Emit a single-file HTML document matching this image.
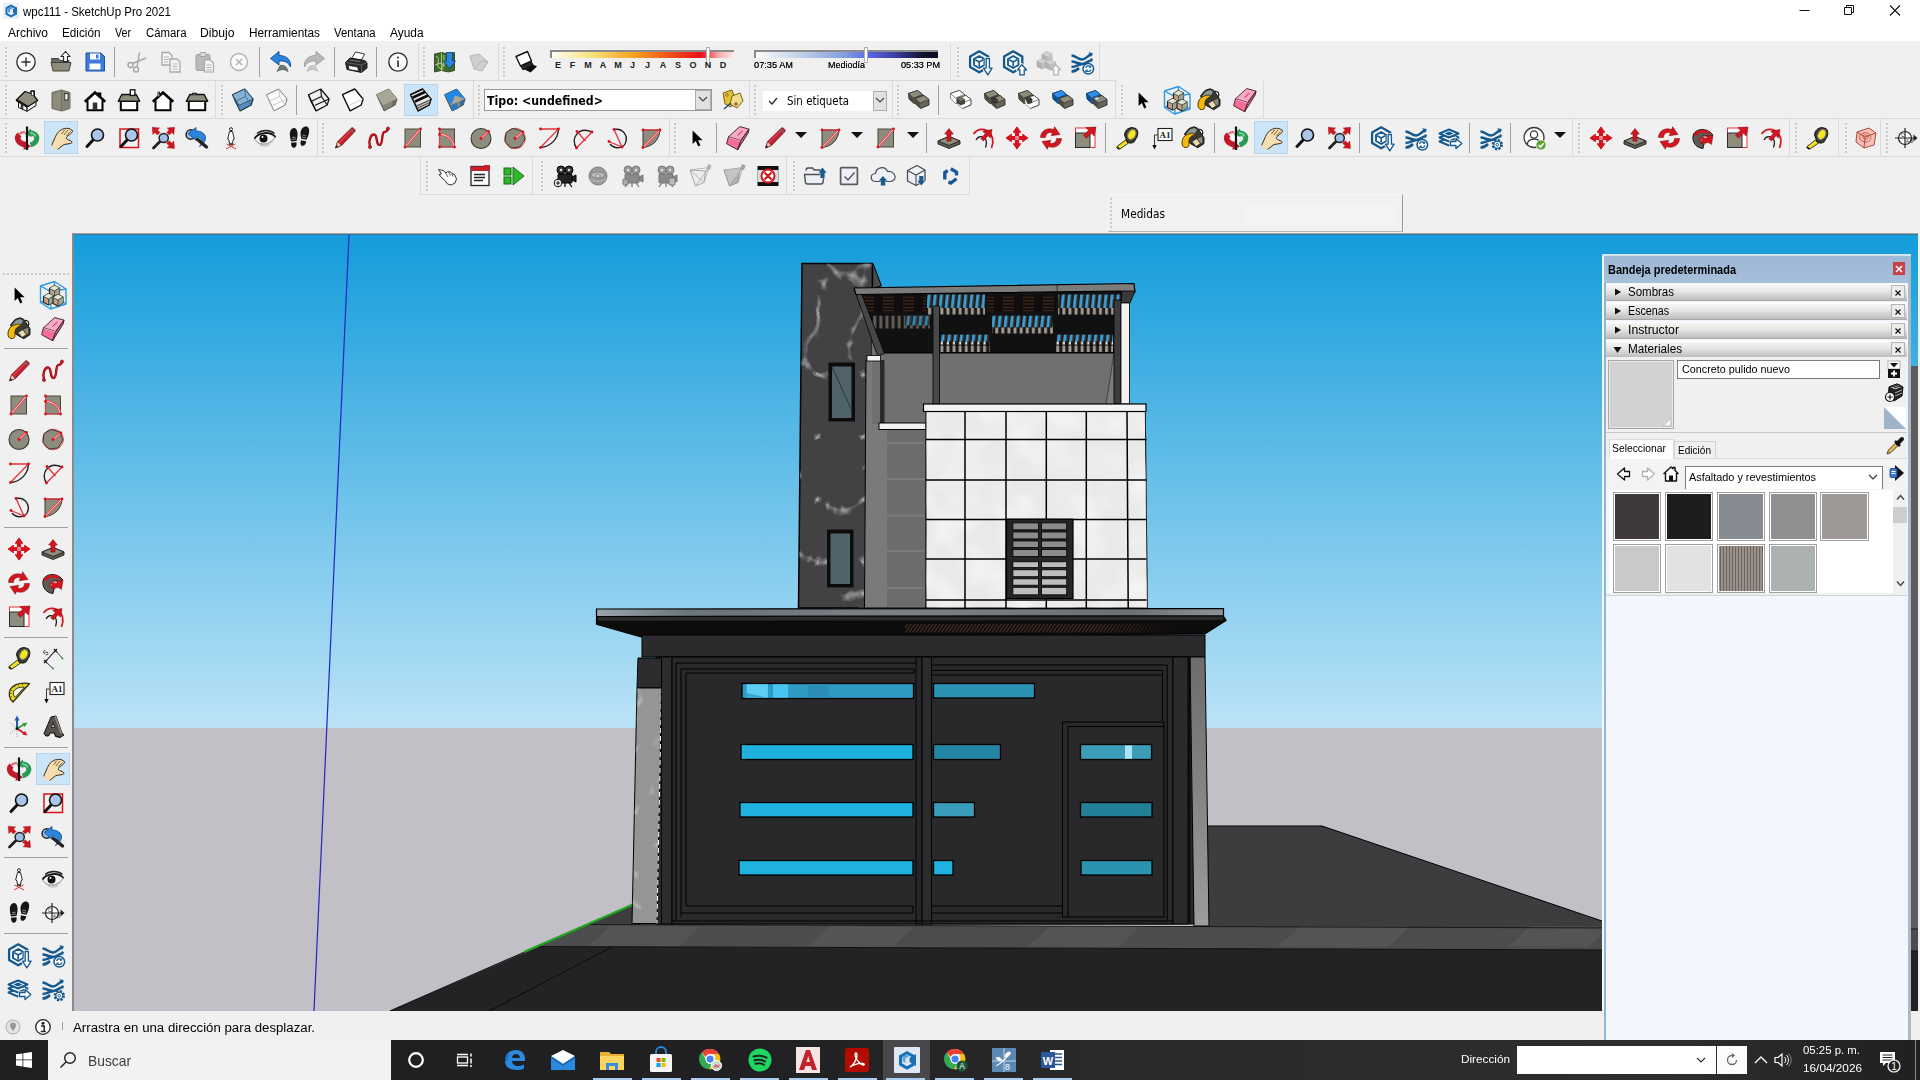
<!DOCTYPE html><html><head><meta charset="utf-8"><title>wpc111 - SketchUp Pro 2021</title>
<style>html,body{margin:0;padding:0}body{width:1920px;height:1080px;overflow:hidden;position:relative;background:#f0f0f0;font-family:"Liberation Sans",sans-serif}svg{overflow:visible}</style></head><body>
<div style="position:absolute;left:0px;top:0px;width:1920px;height:41px;background:#fff;"></div>
<svg style="position:absolute;left:3px;top:3px" width="16" height="16" viewBox="0 0 16 16"><rect width="16" height="16" fill="#e8f0f8"/><path d="M8 1.500l5.500 3-2 1.200L8 3.800 4.500 5.800v4.400l3.500 2 3.500-2 2 1.300L8 14.500 2.500 11.500v-7z" fill="#1a6fb5"/><path d="M10 6l4-2v8l-4-2.300z" fill="#1a6fb5"/><path d="M5 5.500l3-1.500 2 1-3 1.800v3l-2-1z" fill="#4a9ad8"/></svg>
<span style="position:absolute;left:23px;top:3.5px;font:12px/16px 'Liberation Sans',sans-serif;color:#000;white-space:pre;transform-origin:0 50%;transform:scaleX(0.9591);">wpc111 - SketchUp Pro 2021</span>
<span style="position:absolute;left:7.5px;top:24.5px;font:12px/16px 'Liberation Sans',sans-serif;color:#000;white-space:pre;transform-origin:0 50%;transform:scaleX(0.9996);">Archivo</span>
<span style="position:absolute;left:62px;top:24.5px;font:12px/16px 'Liberation Sans',sans-serif;color:#000;white-space:pre;transform-origin:0 50%;transform:scaleX(0.9782);">Edición</span>
<span style="position:absolute;left:115px;top:24.5px;font:12px/16px 'Liberation Sans',sans-serif;color:#000;white-space:pre;transform-origin:0 50%;transform:scaleX(0.8883);">Ver</span>
<span style="position:absolute;left:145.5px;top:24.5px;font:12px/16px 'Liberation Sans',sans-serif;color:#000;white-space:pre;transform-origin:0 50%;transform:scaleX(0.9489);">Cámara</span>
<span style="position:absolute;left:200px;top:24.5px;font:12px/16px 'Liberation Sans',sans-serif;color:#000;white-space:pre;transform-origin:0 50%;transform:scaleX(1.0142);">Dibujo</span>
<span style="position:absolute;left:249px;top:24.5px;font:12px/16px 'Liberation Sans',sans-serif;color:#000;white-space:pre;transform-origin:0 50%;transform:scaleX(0.9858);">Herramientas</span>
<span style="position:absolute;left:334px;top:24.5px;font:12px/16px 'Liberation Sans',sans-serif;color:#000;white-space:pre;transform-origin:0 50%;transform:scaleX(0.9422);">Ventana</span>
<span style="position:absolute;left:390px;top:24.5px;font:12px/16px 'Liberation Sans',sans-serif;color:#000;white-space:pre;transform-origin:0 50%;transform:scaleX(0.9909);">Ayuda</span>
<svg style="position:absolute;left:1780px;top:0" width="140" height="22" viewBox="1780 0 140 22"><path d="M1799.500 10.500h10" stroke="#111" stroke-width="1"/><path d="M1844.500 7.500h7v7h-7zM1846.500 7.500v-2h7v7h-2" fill="none" stroke="#111" stroke-width="1"/><path d="M1890 5.500l10 10M1900 5.500l-10 10" stroke="#111" stroke-width="1.100"/></svg>
<div style="position:absolute;left:0px;top:80px;width:1116px;height:1px;background:#dadada;"></div>
<div style="position:absolute;left:0px;top:118px;width:1920px;height:1px;background:#dadada;"></div>
<div style="position:absolute;left:0px;top:156px;width:1920px;height:1px;background:#dadada;"></div>
<div style="position:absolute;left:420px;top:194px;width:550px;height:1px;background:#dadada;"></div>
<div style="position:absolute;left:969px;top:157px;width:1px;height:38px;background:#dadada;"></div>
<div style="position:absolute;left:420px;top:157px;width:1px;height:38px;background:#dadada;"></div>
<div style="position:absolute;left:5px;top:46.7px;width:2px;height:30.0px;background:repeating-linear-gradient(#cbcbcb 0 2px,transparent 2px 4px)"></div>
<svg style="position:absolute;left:14.0px;top:49.7px" width="24" height="24" viewBox="0 0 24 24"><circle cx="12" cy="12" r="9.200" fill="#fafafa" stroke="#2a2a2a" stroke-width="1.300"/><path d="M12 7.500v9M7.500 12h9" stroke="#2a2a2a" stroke-width="1.400"/></svg>
<svg style="position:absolute;left:49.0px;top:49.7px" width="24" height="24" viewBox="0 0 24 24"><path d="M2.500 8.500h7l1.500 2h9v3h-17z" fill="#6e6c60" stroke="#3a382e" stroke-width="0.900"/><path d="M2 12.500h20l-2 8.500H4z" fill="#8e8c7c" stroke="#3a382e" stroke-width="0.900"/><path d="M16.500 1.500l4.500 5h-2.600v5h-3.800v-5H12z" fill="#fff" stroke="#222" stroke-width="1.100" stroke-linejoin="round"/></svg>
<svg style="position:absolute;left:83.0px;top:49.7px" width="24" height="24" viewBox="0 0 24 24"><path d="M3 3h15l3.5 3.5V21H3z" fill="#3b7bdc" stroke="#1f4fa0" stroke-width="1"/><rect x="7" y="3.5" width="10" height="6" fill="#fff"/><rect x="13" y="4.5" width="2.5" height="4" fill="#3b7bdc"/><rect x="6.5" y="13.5" width="11" height="6" fill="#fff"/></svg>
<div style="position:absolute;left:114px;top:46.7px;width:1px;height:30.0px;background:#a0a0a0;"></div>
<svg style="position:absolute;left:124.0px;top:49.7px" width="24" height="24" viewBox="0 0 24 24"><g fill="none" stroke="#a8a8a8" stroke-width="1.4"><circle cx="6.5" cy="15" r="2.5"/><circle cx="12" cy="19.5" r="2.5"/><path d="M8.5 13.5L22 8M13 17.5L15.5 2.5"/></g></svg>
<svg style="position:absolute;left:159.0px;top:49.7px" width="24" height="24" viewBox="0 0 24 24"><g fill="#f4f4f4" stroke="#a8a8a8" stroke-width="1.3"><path d="M3 2.5h7l3 3V15H3z"/><path d="M11 9h7l3 3v10H11z"/></g><path d="M5 7h5M5 9.5h5M5 12h4M13.5 14h5M13.5 16.5h5M13.5 19h5" stroke="#b4b4b4"/></svg>
<svg style="position:absolute;left:193.0px;top:49.7px" width="24" height="24" viewBox="0 0 24 24"><rect x="3" y="4.500" width="14" height="16" rx="1.5" fill="#b9b9b9" stroke="#a0a0a0"/><rect x="7" y="2.500" width="6" height="4" rx="1" fill="#dcdcdc" stroke="#a0a0a0"/><path d="M11.5 10h6l3 3v9h-9z" fill="#f4f4f4" stroke="#a8a8a8" stroke-width="1.2"/><path d="M13.500 15h5M13.500 17.500h5M13.500 20h5" stroke="#b4b4b4"/></svg>
<svg style="position:absolute;left:227.0px;top:49.7px" width="24" height="24" viewBox="0 0 24 24"><circle cx="12" cy="12" r="8.500" fill="#fafafa" stroke="#b4b4b4" stroke-width="1.4"/><path d="M9 9l6 6M15 9l-6 6" stroke="#b4b4b4" stroke-width="1.5"/></svg>
<div style="position:absolute;left:259px;top:46.7px;width:1px;height:30.0px;background:#a0a0a0;"></div>
<svg style="position:absolute;left:269.0px;top:49.7px" width="24" height="24" viewBox="0 0 24 24"><path d="M11 15.500c4-1 7 1 8 6-4-2.500-7-2.500-11 0z" fill="#6a7a70" stroke="#3a4a40" stroke-width="0.600"/><path d="M1.500 8.500L10 1.500v4c8 0 12.500 5 11.500 11.500-2-4.500-5.500-6.500-11.500-6V15z" fill="#2a86dc" stroke="#0f4a8c" stroke-width="0.900"/></svg>
<svg style="position:absolute;left:302.0px;top:49.7px" width="24" height="24" viewBox="0 0 24 24"><path d="M13 15.500c-4-1-7 1-8 6 4-2.500 7-2.500 11 0z" fill="#c8c8c8" stroke="#b0b0b0" stroke-width="0.600"/><path d="M22.500 8.500L14 1.500v4c-8 0-12.500 5-11.500 11.500 2-4.500 5.500-6.500 11.500-6V15z" fill="#b8b8b8" stroke="#9a9a9a" stroke-width="0.900"/></svg>
<div style="position:absolute;left:334px;top:46.7px;width:1px;height:30.0px;background:#a0a0a0;"></div>
<svg style="position:absolute;left:344.0px;top:49.7px" width="24" height="24" viewBox="0 0 24 24"><path d="M7.500 8.500l4-6.500 9 2-3 6z" fill="#fff" stroke="#222" stroke-width="0.900"/><path d="M1.500 12.500L6 8l14.500 2.500 2.500 2v5.500l-5.500 4.500L3 19.500z" fill="#2c2c2c" stroke="#111" stroke-width="0.900" stroke-linejoin="round"/><path d="M1.500 12.500l16 2.500 5.500-2.500M17.500 15v7.500" stroke="#6a6a6a" stroke-width="0.800" fill="none"/><path d="M6 10l10 1.500" stroke="#777" stroke-width="1.200"/><path d="M4.500 15.500l9 1.500 1 4-9.500-1.500z" fill="#fff" stroke="#111" stroke-width="0.600"/></svg>
<div style="position:absolute;left:376px;top:46.7px;width:1px;height:30.0px;background:#a0a0a0;"></div>
<svg style="position:absolute;left:386.0px;top:49.7px" width="24" height="24" viewBox="0 0 24 24"><circle cx="12" cy="12" r="9.200" fill="#fafafa" stroke="#2a2a2a" stroke-width="1.300"/><path d="M12 10.500v6.500" stroke="#2a2a2a" stroke-width="1.600"/><circle cx="12" cy="7.500" r="1" fill="#2a2a2a"/></svg>
<div style="position:absolute;left:418px;top:42.7px;width:1px;height:38.0px;background:#dadada;"></div>
<div style="position:absolute;left:423px;top:46.7px;width:2px;height:30.0px;background:repeating-linear-gradient(#cbcbcb 0 2px,transparent 2px 4px)"></div>
<svg style="position:absolute;left:433.0px;top:49.7px" width="24" height="24" viewBox="0 0 24 24"><path d="M1.500 4l7-1.500 7 1.500 6-1.500v18l-6 1.500-7-1.500-7 1.500z" fill="#3f6a2a" stroke="#1e3612" stroke-width="0.800"/><path d="M3 6c2 1 3 4 2 7s1 5 3 6M8.500 3v18M11 5c-1 3 1 5 0 8s-2 4-1 7" stroke="#9cc878" stroke-width="1.100" fill="none"/><path d="M2 15l6-2 4 3" stroke="#c8c0a0" stroke-width="1" fill="none"/><path d="M13.500 2.500h6v8.500h3l-6 7.500-6-7.500h3z" fill="#2a86dc" stroke="#0f4a8c" stroke-width="0.900"/></svg>
<svg style="position:absolute;left:467.0px;top:49.7px" width="24" height="24" viewBox="0 0 24 24"><path d="M3 6l9-2 9 8-6 9-8-2z" fill="#d0d0d0" stroke="#b4b4b4"/><path d="M7 19l8-8 6 1" stroke="#b4b4b4" fill="none"/></svg>
<div style="position:absolute;left:498px;top:42.7px;width:1px;height:38.0px;background:#dadada;"></div>
<div style="position:absolute;left:503px;top:46.7px;width:2px;height:30.0px;background:repeating-linear-gradient(#cbcbcb 0 2px,transparent 2px 4px)"></div>
<svg style="position:absolute;left:514.0px;top:49.7px" width="24" height="24" viewBox="0 0 24 24"><path d="M7 17.500l9.500 5 6.500-6-6-3z" fill="#0c0c0c"/><path d="M6.500 16l10.500-5 2 3.500-10 5.500z" fill="#2a2a2a" stroke="#111" stroke-width="0.800"/><path d="M2 6.500L13.500 1.500l4 9.500L6.500 16z" fill="#fff" stroke="#111" stroke-width="1.400" stroke-linejoin="round"/></svg>
<div style="position:absolute;left:950px;top:42.7px;width:1px;height:38.0px;background:#dadada;"></div>
<div style="position:absolute;left:957px;top:46.7px;width:2px;height:30.0px;background:repeating-linear-gradient(#cbcbcb 0 2px,transparent 2px 4px)"></div>
<svg style="position:absolute;left:968.0px;top:49.7px" width="24" height="24" viewBox="0 0 24 24"><path d="M11.200 1.300L20.300 6.550V17.050L11.200 22.300 2.100 17.050V6.550z" fill="#f0f0f0" stroke="#14598f" stroke-width="2.300" stroke-linejoin="round"/><path d="M11.200 3.900L18 7.850v7.900L11.200 19.700 4.400 15.750V7.850z" fill="none" stroke="#fff" stroke-width="1"/><path d="M11.200 6L16.400 9v6L11.200 18 6 15V9z" fill="#fff" stroke="#14598f" stroke-width="1.900" stroke-linejoin="round"/><path d="M11.200 12v4.500M11.200 12l3.900-2.200M11.200 12L7.300 9.800" stroke="#14598f" stroke-width="1.600"/><path d="M18.200 8.500h3.200v9.700h2.700L19.800 24.900 15.500 18.200h2.700z" fill="#fff" stroke="#f0f0f0" stroke-width="3" stroke-linejoin="round"/><path d="M18.200 8.500h3.200v9.700h2.700L19.800 24.900 15.500 18.200h2.700z" fill="#fff" stroke="#14598f" stroke-width="1.300" stroke-linejoin="round"/></svg>
<svg style="position:absolute;left:1002.0px;top:49.7px" width="24" height="24" viewBox="0 0 24 24"><path d="M11.200 1.300L20.300 6.550V17.050L11.200 22.300 2.100 17.050V6.550z" fill="#f0f0f0" stroke="#14598f" stroke-width="2.300" stroke-linejoin="round"/><path d="M11.200 3.900L18 7.850v7.900L11.200 19.700 4.400 15.750V7.850z" fill="none" stroke="#fff" stroke-width="1"/><path d="M11.200 6L16.400 9v6L11.200 18 6 15V9z" fill="#fff" stroke="#14598f" stroke-width="1.900" stroke-linejoin="round"/><path d="M11.200 12v4.500M11.200 12l3.900-2.200M11.200 12L7.300 9.800" stroke="#14598f" stroke-width="1.600"/><path d="M17.900 24.900h4.300v-5.100h2.300L19.800 14.700 15.500 19.800h2.400z" fill="#fff" stroke="#f0f0f0" stroke-width="3" stroke-linejoin="round"/><path d="M17.900 24.900h4.300v-5.100h2.300L19.800 14.700 15.500 19.800h2.400z" fill="#fff" stroke="#14598f" stroke-width="1.300" stroke-linejoin="round"/></svg>
<svg style="position:absolute;left:1036.0px;top:49.7px" width="24" height="24" viewBox="0 0 24 24"><g transform="translate(6 1.5)"><path d="M0 2.500L5 0l5 2.500v5.500L5 10.500 0 8z" fill="#b4b4b4" stroke="#a0a0a0" stroke-width="0.600"/><path d="M0 2.500L5 0l5 2.500L5 5z" fill="#d2d2d2"/><path d="M5 5l5-2.500v5.500L5 10.500z" fill="#c2c2c2"/></g><g transform="translate(1 8.5)"><path d="M0 2.500L5 0l5 2.500v5.500L5 10.500 0 8z" fill="#b4b4b4" stroke="#a0a0a0" stroke-width="0.600"/><path d="M0 2.500L5 0l5 2.500L5 5z" fill="#d2d2d2"/><path d="M5 5l5-2.500v5.500L5 10.500z" fill="#c2c2c2"/></g><g transform="translate(9.5 9.5)"><path d="M0 2.500L5 0l5 2.500v5.500L5 10.500 0 8z" fill="#b4b4b4" stroke="#a0a0a0" stroke-width="0.600"/><path d="M0 2.500L5 0l5 2.500L5 5z" fill="#d2d2d2"/><path d="M5 5l5-2.500v5.500L5 10.500z" fill="#c2c2c2"/></g><path d="M17.900 24.900h4.300v-5.100h2.300L19.800 14.700 15.500 19.800h2.400z" fill="#fff" stroke="#b4b4b4" stroke-width="1.300" stroke-linejoin="round"/></svg>
<svg style="position:absolute;left:1070.0px;top:49.7px" width="24" height="24" viewBox="0 0 24 24"><g fill="none" stroke="#14598f" stroke-width="2.600" stroke-linejoin="round"><path d="M1.500 5.500c4 0 6.500 4 10.500 4s6.500-5 10-5.500"/><path d="M1.500 11.500c4 0 6.500 2.500 10.500 2.500s6.500-3.500 10-4"/><path d="M1.500 17c4 0 7-2.500 10.500-3"/><path d="M1.500 21.500c3 0 5.500-1.500 7.500-3.500"/></g><path d="M18.500 2l4.500 1.500-2 3.500z" fill="#14598f"/><path d="M20.500 8l2.500 1-1 3z" fill="#14598f"/><circle cx="18.300" cy="18.700" r="5.300" fill="#fff" stroke="#14598f" stroke-width="1.500"/><path d="M15.600 18a2.800 2.800 0 0 1 4.900-1.100M21 19.400a2.800 2.800 0 0 1-4.900 1.100" stroke="#14598f" stroke-width="1.200" fill="none"/><path d="M20.800 15.400v1.900h-1.900M15.800 22v-1.900h1.900" stroke="#14598f" stroke-width="1" fill="none"/></svg>
<div style="position:absolute;left:1099px;top:42.7px;width:1px;height:38.0px;background:#dadada;"></div>
<div style="position:absolute;left:950px;top:80px;width:150px;height:1px;background:#dadada;"></div>
<div style="position:absolute;left:5px;top:84.8px;width:2px;height:30.0px;background:repeating-linear-gradient(#cbcbcb 0 2px,transparent 2px 4px)"></div>
<svg style="position:absolute;left:15.0px;top:87.8px" width="24" height="24" viewBox="0 0 24 24"><path d="M3.500 12.500v7l8.500 3.800v-7z" fill="#fff" stroke="#111" stroke-width="1"/><path d="M12 16.300l9-5.300v6.500l-9 5.800z" fill="#ececec" stroke="#111" stroke-width="1"/><path d="M1.300 12L10 3.500l6 2V3h3.300v5.200l3.400 4.300-10.200 6.300z" fill="#8e8c7c" stroke="#111" stroke-width="1.300" stroke-linejoin="round"/><path d="M1.300 12l11.200 6.800" stroke="#111" stroke-width="2.200"/><path d="M5.700 15v5.300l2.600 1.100v-5.200z" fill="#333"/><rect x="16.500" y="3.600" width="2.200" height="3.800" fill="#fff" stroke="#111" stroke-width="0.600"/></svg>
<svg style="position:absolute;left:49.0px;top:87.8px" width="24" height="24" viewBox="0 0 24 24"><path d="M3 4.500L12.500 2l8.500 2.500v16L13 23 3 20.500z" fill="#8e8c7c" stroke="#5e5c50" stroke-width="0.900" stroke-linejoin="round"/><path d="M12.500 2L13 23" stroke="#5e5c50" stroke-width="0.900"/><path d="M13 23l8-2.500v-16L12.500 2z" fill="#848272"/><rect x="15.800" y="5.500" width="3.200" height="6.500" fill="#fff" stroke="#333" stroke-width="1"/></svg>
<svg style="position:absolute;left:83.0px;top:87.8px" width="24" height="24" viewBox="0 0 24 24"><path d="M4.500 12v10.200h15V12L12 5.500z" fill="#fff"/><path d="M1.800 13.800L12 4.500l3.200 2.900V5.800h1.800v3.200l5.200 4.800" fill="none" stroke="#000" stroke-width="2.600" stroke-linejoin="miter"/><path d="M4.500 12.500v9.700h15V12.500" fill="none" stroke="#000" stroke-width="2"/><rect x="9.700" y="14.500" width="4.600" height="7.500" fill="#333"/></svg>
<svg style="position:absolute;left:117.0px;top:87.8px" width="24" height="24" viewBox="0 0 24 24"><rect x="3.800" y="13" width="16.400" height="9.200" fill="#fff" stroke="#000" stroke-width="2"/><path d="M1.300 13.200L4.800 6.500h14.400l3.500 6.700z" fill="#8e8c7c" stroke="#111" stroke-width="1.400" stroke-linejoin="round"/><rect x="13.300" y="1.800" width="4.600" height="5.700" fill="#fff" stroke="#111" stroke-width="1.300"/></svg>
<svg style="position:absolute;left:151.0px;top:87.8px" width="24" height="24" viewBox="0 0 24 24"><path d="M4.500 12v10.200h15V12L12 5.500z" fill="#fff"/><path d="M1.800 13.800L12 4.500l10.200 9.300" fill="none" stroke="#000" stroke-width="2.600"/><path d="M4.500 12.500v9.700h15V12.500" fill="none" stroke="#000" stroke-width="2"/><path d="M7 9V4h1.500v3.500" fill="#fff" stroke="#111" stroke-width="0.900"/></svg>
<svg style="position:absolute;left:185.0px;top:87.8px" width="24" height="24" viewBox="0 0 24 24"><rect x="3.800" y="13" width="16.400" height="9.200" fill="#fff" stroke="#000" stroke-width="2"/><path d="M1.300 13.200L4.800 6.500h14.400l3.500 6.700z" fill="#8e8c7c" stroke="#111" stroke-width="1.400" stroke-linejoin="round"/><path d="M7.500 6.500V5.200h4v1.300" fill="#8e8c7c" stroke="#111" stroke-width="1"/></svg>
<div style="position:absolute;left:215px;top:80.8px;width:1px;height:38.0px;background:#dadada;"></div>
<div style="position:absolute;left:221px;top:84.8px;width:2px;height:30.0px;background:repeating-linear-gradient(#cbcbcb 0 2px,transparent 2px 4px)"></div>
<svg style="position:absolute;left:231.0px;top:87.8px" width="24" height="24" viewBox="0 0 24 24"><path d="M1.500 6.700L13.700 1 22.100 11 20.200 17 9.100 22.900z" fill="#5a8ec0" stroke="#1a2a3a" stroke-width="1.100" stroke-linejoin="round"/><path d="M1.500 6.700L13.700 1 22.100 11 8 17.300z" fill="#86b2d8" stroke="#1a2a3a" stroke-width="0.600"/><g fill="none" stroke="#3a6288" stroke-width="0.800"><path d="M1.500 6.700L4 13.500l5.100 9.400M4 13.500L14.500 8.500l5.700 8.500M13.700 1l.8 7.500"/></g></svg>
<svg style="position:absolute;left:265.0px;top:87.8px" width="24" height="24" viewBox="0 0 24 24"><path d="M1.500 6.700L13.700 1 22.100 11 20.200 17 9.100 22.900z" fill="#fdfdfd" stroke="#777" stroke-width="1" stroke-linejoin="round"/><g fill="none" stroke="#b8b8b8" stroke-width="0.800"><path d="M8 17.300L22.100 11M1.500 6.700L4 13.500l5.100 9.400M4 13.500L14.500 8.500l5.700 8.500M13.700 1l.8 7.500"/></g></svg>
<div style="position:absolute;left:296px;top:84.8px;width:1px;height:30.0px;background:#a0a0a0;"></div>
<svg style="position:absolute;left:307.0px;top:87.8px" width="24" height="24" viewBox="0 0 24 24"><g fill="none" stroke="#111" stroke-width="1.200" stroke-linejoin="round"><path d="M1.500 6.700L13.700 1 22.100 11 20.200 17 9.100 22.900z"/><path d="M8 17.300L22.100 11M1.500 6.700L4 13.500l5.100 9.400M4 13.500L14.500 8.500l5.700 8.500M13.700 1l.8 7.500"/></g></svg>
<svg style="position:absolute;left:341.0px;top:87.8px" width="24" height="24" viewBox="0 0 24 24"><path d="M1.500 6.700L13.700 1 22.100 11 20.200 17 9.100 22.900z" fill="#fff" stroke="#111" stroke-width="1.400" stroke-linejoin="round"/><path d="M8 17.300L22.100 11" stroke="#c4c4c4" stroke-width="0.800"/></svg>
<svg style="position:absolute;left:375.0px;top:87.8px" width="24" height="24" viewBox="0 0 24 24"><path d="M1.500 6.700L13.700 1 22.100 11 20.200 17 9.100 22.900z" fill="#86847a" stroke="#55534a" stroke-width="0.900" stroke-linejoin="round"/><path d="M1.500 6.700L13.700 1 22.100 11 8 17.300z" fill="#a8a696"/><path d="M17 13.300l5.100-2.300-1.900 6-3 1.600z" fill="#6e6c60"/></svg>
<div style="position:absolute;left:404.3px;top:83.5px;width:33.599999999999966px;height:32.400000000000006px;background:#cce4f7;border:1px solid #b6d6f0;box-sizing:border-box"></div>
<svg style="position:absolute;left:409.0px;top:87.8px" width="24" height="24" viewBox="0 0 24 24"><path d="M1.500 6.700L13.700 1 22.100 11 20.200 17 9.100 22.900z" fill="#8a8878" stroke="#111" stroke-width="1.100" stroke-linejoin="round"/><path d="M1.500 6.700L13.700 1 22.100 11 8 17.300z" fill="#e8e8e8"/><path d="M3.500 9.800L15.800 4M6 13.500L19 7.500" stroke="#0c0c0c" stroke-width="2.600"/><path d="M1.500 6.700L13.700 1" stroke="#0c0c0c" stroke-width="1.600"/><path d="M8 17.300L22.100 11 20.200 17 9.100 22.900z" fill="#55534a"/><path d="M8.300 19l12.800-5.800M8.800 21.300l11.800-5.600" stroke="#c8c8c8" stroke-width="1.100"/><path d="M1.500 6.700L13.700 1 22.100 11 20.200 17 9.100 22.900z" fill="none" stroke="#111" stroke-width="1.100" stroke-linejoin="round"/></svg>
<svg style="position:absolute;left:443.0px;top:87.8px" width="24" height="24" viewBox="0 0 24 24"><path d="M1.500 6.700L13.700 1 22.100 11 20.200 17 9.100 22.900z" fill="#8a8878" stroke="#2a3a4a" stroke-width="0.900" stroke-linejoin="round"/><path d="M1.500 6.700L13.700 1 22.100 11 8 17.300z" fill="#1f8ae6"/><path d="M8 17.300L22.100 11 12 7.500z" fill="#b0a890"/><path d="M8 17.300l6-2.700 1 6.300-5.900 2z" fill="#2d78c0"/><path d="M17 13.300l5.100-2.300-1.900 6-3 1.600z" fill="#3a6a9a"/></svg>
<div style="position:absolute;left:473px;top:80.8px;width:1px;height:38.0px;background:#dadada;"></div>
<div style="position:absolute;left:478px;top:84.8px;width:2px;height:30.0px;background:repeating-linear-gradient(#cbcbcb 0 2px,transparent 2px 4px)"></div>
<svg style="position:absolute;left:720.5px;top:87.8px" width="24" height="24" viewBox="0 0 24 24"><path d="M2 5l9-3 3 9-4 8-6-3z" fill="#e6c12e" stroke="#7a6210"/><path d="M11 8l8-3 3 8-6 7-7-4z" fill="#f0dc8a" stroke="#7a6210"/><circle cx="6" cy="7" r="1.200" fill="#fff" stroke="#7a6210"/><circle cx="15" cy="16" r="1.400" fill="#d9534f" stroke="#7a6210" stroke-width="0.6"/><path d="M3 21l7-6" stroke="#24408e" stroke-width="1.500"/></svg>
<div style="position:absolute;left:749px;top:80.8px;width:1px;height:38.0px;background:#dadada;"></div>
<div style="position:absolute;left:754px;top:84.8px;width:2px;height:30.0px;background:repeating-linear-gradient(#cbcbcb 0 2px,transparent 2px 4px)"></div>
<div style="position:absolute;left:892px;top:80.8px;width:1px;height:38.0px;background:#dadada;"></div>
<div style="position:absolute;left:897px;top:84.8px;width:2px;height:30.0px;background:repeating-linear-gradient(#cbcbcb 0 2px,transparent 2px 4px)"></div>
<svg style="position:absolute;left:907.0px;top:87.8px" width="24" height="24" viewBox="0 0 24 24"><path d="M1.5 5.5L10.5 2.5L15.5 6.5L15.5 12.0L7.0 15.5L2.0 11.0z" fill="#68665a" stroke="#2a2a26" stroke-width="0.9" stroke-linejoin="round"/><path d="M1.5 5.5L6.5 10.0L7.0 15.5L2.0 11.0z" fill="#4e4c42"/><path d="M1.5 5.5L10.5 2.5L15.5 6.5L6.5 10.0z" fill="#8e8c7c" stroke="#2a2a26" stroke-width="0.6" stroke-linejoin="round"/><path d="M8 10.5L17 7.5L22 11.5L22 17.0L13.5 20.5L8.5 16.0z" fill="#68665a" stroke="#2a2a26" stroke-width="0.9" stroke-linejoin="round"/><path d="M8 10.5L13 15.0L13.5 20.5L8.5 16.0z" fill="#4e4c42"/><path d="M8 10.5L17 7.5L22 11.5L13 15.0z" fill="#8e8c7c" stroke="#2a2a26" stroke-width="0.6" stroke-linejoin="round"/></svg>
<div style="position:absolute;left:938px;top:84.8px;width:1px;height:30.0px;background:#a0a0a0;"></div>
<svg style="position:absolute;left:949.0px;top:87.8px" width="24" height="24" viewBox="0 0 24 24"><path d="M1.5 5.5L10.5 2.5L15.5 6.5L15.5 12.0L7.0 15.5L2.0 11.0z" fill="#fff" stroke="#2a2a26" stroke-width="0.9" stroke-linejoin="round"/><path d="M1.5 5.5L6.5 10.0L7.0 15.5L2.0 11.0z" fill="#fff"/><path d="M1.5 5.5L10.5 2.5L15.5 6.5L6.5 10.0z" fill="#fff" stroke="#2a2a26" stroke-width="0.6" stroke-linejoin="round"/><path d="M8 10.5L17 7.5L22 11.5L22 17.0L13.5 20.5L8.5 16.0z" fill="#fff" stroke="#2a2a26" stroke-width="0.9" stroke-linejoin="round"/><path d="M8 10.5L13 15.0L13.5 20.5L8.5 16.0z" fill="#fff"/><path d="M8 10.5L17 7.5L22 11.5L13 15.0z" fill="#fff" stroke="#2a2a26" stroke-width="0.6" stroke-linejoin="round"/><path d="M8 10.500l4-1.500 3.500 2.500v4l-4 1.500L8 14.500z" fill="#4a483e" stroke="#222" stroke-width="0.700"/><path d="M8 10.500l4-1.500 3.500 2.500-4 1.500z" fill="#77756a"/></svg>
<svg style="position:absolute;left:983.0px;top:87.8px" width="24" height="24" viewBox="0 0 24 24"><path d="M1.5 5.5L10.5 2.5L15.5 6.5L15.5 12.0L7.0 15.5L2.0 11.0z" fill="#68665a" stroke="#2a2a26" stroke-width="0.9" stroke-linejoin="round"/><path d="M1.5 5.5L6.5 10.0L7.0 15.5L2.0 11.0z" fill="#4e4c42"/><path d="M1.5 5.5L10.5 2.5L15.5 6.5L6.5 10.0z" fill="#8e8c7c" stroke="#2a2a26" stroke-width="0.6" stroke-linejoin="round"/><path d="M8 10.5L17 7.5L22 11.5L22 17.0L13.5 20.5L8.5 16.0z" fill="#68665a" stroke="#2a2a26" stroke-width="0.9" stroke-linejoin="round"/><path d="M8 10.5L13 15.0L13.5 20.5L8.5 16.0z" fill="#4e4c42"/><path d="M8 10.5L17 7.5L22 11.5L13 15.0z" fill="#8e8c7c" stroke="#2a2a26" stroke-width="0.6" stroke-linejoin="round"/><path d="M9 10.500l3-1 2.500 2v2.500l-3 1-2.500-1.500z" fill="#3e3c34" stroke="#222" stroke-width="0.600"/></svg>
<svg style="position:absolute;left:1017.0px;top:87.8px" width="24" height="24" viewBox="0 0 24 24"><path d="M1.5 5.5L10.5 2.5L15.5 6.5L15.5 12.0L7.0 15.5L2.0 11.0z" fill="#68665a" stroke="#2a2a26" stroke-width="0.9" stroke-linejoin="round"/><path d="M1.5 5.5L6.5 10.0L7.0 15.5L2.0 11.0z" fill="#4e4c42"/><path d="M1.5 5.5L10.5 2.5L15.5 6.5L6.5 10.0z" fill="#8e8c7c" stroke="#2a2a26" stroke-width="0.6" stroke-linejoin="round"/><path d="M8 10.5L17 7.5L22 11.5L22 17.0L13.5 20.5L8.5 16.0z" fill="#fff" stroke="#2a2a26" stroke-width="0.9" stroke-linejoin="round"/><path d="M8 10.5L13 15.0L13.5 20.5L8.5 16.0z" fill="#fff"/><path d="M8 10.5L17 7.5L22 11.5L13 15.0z" fill="#fff" stroke="#2a2a26" stroke-width="0.6" stroke-linejoin="round"/><path d="M8.500 10.500l4-1.500 2.500 2v3.500l-4 1.500z" fill="#3e3c34" stroke="#222" stroke-width="0.600"/></svg>
<svg style="position:absolute;left:1051.0px;top:87.8px" width="24" height="24" viewBox="0 0 24 24"><path d="M1.5 5.5L10.5 2.5L15.5 6.5L15.5 12.0L7.0 15.5L2.0 11.0z" fill="#1a6cc0" stroke="#0a3260" stroke-width="0.9" stroke-linejoin="round"/><path d="M1.5 5.5L6.5 10.0L7.0 15.5L2.0 11.0z" fill="#12508e"/><path d="M1.5 5.5L10.5 2.5L15.5 6.5L6.5 10.0z" fill="#2f8ee8" stroke="#0a3260" stroke-width="0.6" stroke-linejoin="round"/><path d="M8 10.5L17 7.5L22 11.5L22 17.0L13.5 20.5L8.5 16.0z" fill="#68665a" stroke="#2a2a26" stroke-width="0.9" stroke-linejoin="round"/><path d="M8 10.5L13 15.0L13.5 20.5L8.5 16.0z" fill="#4e4c42"/><path d="M8 10.5L17 7.5L22 11.5L13 15.0z" fill="#8e8c7c" stroke="#2a2a26" stroke-width="0.6" stroke-linejoin="round"/></svg>
<svg style="position:absolute;left:1085.0px;top:87.8px" width="24" height="24" viewBox="0 0 24 24"><path d="M1.5 5.5L10.5 2.5L15.5 6.5L15.5 12.0L7.0 15.5L2.0 11.0z" fill="#1a6cc0" stroke="#0a3260" stroke-width="0.9" stroke-linejoin="round"/><path d="M1.5 5.5L6.5 10.0L7.0 15.5L2.0 11.0z" fill="#12508e"/><path d="M1.5 5.5L10.5 2.5L15.5 6.5L6.5 10.0z" fill="#2f8ee8" stroke="#0a3260" stroke-width="0.6" stroke-linejoin="round"/><path d="M8 10.5L17 7.5L22 11.5L22 17.0L13.5 20.5L8.5 16.0z" fill="#68665a" stroke="#2a2a26" stroke-width="0.9" stroke-linejoin="round"/><path d="M8 10.5L13 15.0L13.5 20.5L8.5 16.0z" fill="#4e4c42"/><path d="M8 10.5L17 7.5L22 11.5L13 15.0z" fill="#8e8c7c" stroke="#2a2a26" stroke-width="0.6" stroke-linejoin="round"/><path d="M8.500 10.200l4-1.400 3 2.200-4 1.500z" fill="#d0d0d0" stroke="#444" stroke-width="0.500"/></svg>
<div style="position:absolute;left:1115px;top:80.8px;width:1px;height:38.0px;background:#dadada;"></div>
<div style="position:absolute;left:1121px;top:84.8px;width:2px;height:30.0px;background:repeating-linear-gradient(#cbcbcb 0 2px,transparent 2px 4px)"></div>
<svg style="position:absolute;left:1131.0px;top:87.8px" width="24" height="24" viewBox="0 0 24 24"><path d="M7 2.500v17l4-3.800 3 6.800 2.800-1.300-3-6.500H19.500z" fill="#000" transform="translate(12 12) scale(.8) translate(-12.500 -12)"/></svg>
<svg style="position:absolute;left:1165.0px;top:87.8px" width="24" height="24" viewBox="0 0 24 24"><g fill="none" stroke="#2d9ae0" stroke-width="1.400" stroke-linejoin="round"><path d="M-.5 3L13.500-1.500 25 6v15L9.500 26-.5 19.500z"/><path d="M-.5 3l10.400 5.600L25 6M9.900 8.600V26M13.500-1.500V14L-.5 19.500M13.500 14L25 21"/></g><g transform="translate(8.5 2.5) scale(1.0)"><path d="M0 3L5 0l5 2.500v6L5 11.500 0 9z" fill="#c8a088" stroke="#222" stroke-width="1.200" stroke-linejoin="round"/><path d="M0 3L5 0l5 2.500L5 5.500z" fill="#dce8d4"/><path d="M5 5.500l5-3v6L5 11.500z" fill="#9aa696"/><path d="M0 3l5 2.500v6M5 5.500l5-3" fill="none" stroke="#222" stroke-width="0.700"/></g><g transform="translate(2.5 10.5) scale(1.0)"><path d="M0 3L5 0l5 2.500v6L5 11.500 0 9z" fill="#c8a088" stroke="#222" stroke-width="1.200" stroke-linejoin="round"/><path d="M0 3L5 0l5 2.500L5 5.500z" fill="#dce8d4"/><path d="M5 5.500l5-3v6L5 11.500z" fill="#9aa696"/><path d="M0 3l5 2.500v6M5 5.500l5-3" fill="none" stroke="#222" stroke-width="0.700"/></g><g transform="translate(12 11.5) scale(1.0)"><path d="M0 3L5 0l5 2.500v6L5 11.500 0 9z" fill="#c8a088" stroke="#222" stroke-width="1.200" stroke-linejoin="round"/><path d="M0 3L5 0l5 2.500L5 5.500z" fill="#dce8d4"/><path d="M5 5.500l5-3v6L5 11.500z" fill="#9aa696"/><path d="M0 3l5 2.500v6M5 5.500l5-3" fill="none" stroke="#222" stroke-width="0.700"/></g></svg>
<svg style="position:absolute;left:1197.0px;top:87.8px" width="24" height="24" viewBox="0 0 24 24"><path d="M3.500 8L8 2.500 13 .8l3.700 1.500L23 11.800l-.1 5.900-6.200 4-7.900-4.500z" fill="#3a3a34" stroke="#111" stroke-width="1"/><path d="M5 8l4-4.500L13 2l3 1.500-3 5.500-4 2z" fill="#8c9c9c"/><path d="M11 15.500l5-3 3.500 5-4.500 3z" fill="#ecdcae" stroke="#222" stroke-width="0.700"/><path d="M16 12.500l5.500-2.500.5 7-2.500.5z" fill="#8e8c7c" stroke="#222" stroke-width="0.600"/><path d="M17 3.500c4-1 6 2 4 5.500" fill="none" stroke="#222" stroke-width="1.200"/><path d="M1 17C1 11 5 7.500 12 7l2 1.500c-5 1.500-6.500 4.500-6 9 .3 3-1.500 4.500-4 4-2-.5-3-2-3-4.500z" fill="#f6b80c" stroke="#3a2a00" stroke-width="0.900"/></svg>
<svg style="position:absolute;left:1233.0px;top:87.8px" width="24" height="24" viewBox="0 0 24 24"><path d="M2.500 10.800L14.800 14.500 11.600 23.800.6 17.700z" fill="#f86c96" stroke="#3a1a26" stroke-width="0.900" stroke-linejoin="round"/><path d="M2.500 10.800L14.800 14.500 23 3.100 13.700.6z" fill="#f9aac2" stroke="#3a1a26" stroke-width="0.900" stroke-linejoin="round"/><path d="M14.800 14.500L23 3.100 22.200 7 11.600 23.800z" fill="#c8607f" stroke="#3a1a26" stroke-width="0.900" stroke-linejoin="round"/><path d="M11.500 9.500l5-4.500" stroke="#d06088" stroke-width="1.500"/><path d="M3 11.500l11.500 3.500" stroke="#fcd0dc" stroke-width="0.800"/></svg>
<div style="position:absolute;left:1263px;top:80.8px;width:1px;height:38.0px;background:#dadada;"></div>
<div style="position:absolute;left:5px;top:122.69999999999999px;width:2px;height:30.0px;background:repeating-linear-gradient(#cbcbcb 0 2px,transparent 2px 4px)"></div>
<svg style="position:absolute;left:15.0px;top:125.69999999999999px" width="24" height="24" viewBox="0 0 24 24"><path d="M4.500 8.500C1 12 2 17 12 19.500" stroke="#c2182a" stroke-width="5.500" fill="none"/><path d="M9.500 15l6.500 5.500-7.500 3.500z" fill="#c2182a"/><path d="M4 8c2-1.500 4-2 6-2" stroke="#e86070" stroke-width="2" fill="none"/><path d="M13.500 7.500c5-1.500 9.500 2 8 6.500-.8 2.500-3 4-6 5" stroke="#2a9a55" stroke-width="5" fill="none"/><path d="M16 2.500L9.500 8l7 3z" fill="#2a9a55"/><path d="M15 7c3 0 5 1.500 5.500 3.500" stroke="#7ad8a0" stroke-width="1.600" fill="none"/><ellipse cx="11" cy="12.500" rx="3.500" ry="1.600" fill="#fff"/><path d="M12 .5v23.500" stroke="#111" stroke-width="2.200"/></svg>
<div style="position:absolute;left:44.3px;top:121.39999999999999px;width:33.60000000000001px;height:32.39999999999999px;background:#cce4f7;border:1px solid #b6d6f0;box-sizing:border-box"></div>
<svg style="position:absolute;left:49.0px;top:125.69999999999999px" width="24" height="24" viewBox="0 0 24 24"><path d="M2.500 19.500L6.500 10.500C8 7 10 5 12 4c2-1.500 5-2 8-1.500l3.500 2c.5 1.500-1.500 3-3 4L18 10.500c-1 1.500-1 2.500.5 3l3.500 1.500c1.500 1 1 2.500-.5 2.500L15 18.500 8.500 23.500z" fill="#f6deb0" stroke="#3a3020" stroke-width="1"/><path d="M12.500 8L16 3.500M15 9l4-5M17.500 10l4-4.500" stroke="#6a5020" stroke-width="0.900"/><path d="M2.500 19.500l6 4" stroke="#f6deb0" stroke-width="1.600"/></svg>
<svg style="position:absolute;left:83.0px;top:125.69999999999999px" width="24" height="24" viewBox="0 0 24 24"><line x1="4" y1="20.5" x2="11" y2="13" stroke="#111" stroke-width="3" stroke-linecap="round"/><circle cx="14.5" cy="9" r="6" fill="#a9c6e8" stroke="#111" stroke-width="1.6"/></svg>
<svg style="position:absolute;left:117.0px;top:125.69999999999999px" width="24" height="24" viewBox="0 0 24 24"><rect x="3" y="3" width="18.500" height="18.500" fill="none" stroke="#d8121a" stroke-width="1.500"/><line x1="4" y1="20.5" x2="11" y2="13" stroke="#111" stroke-width="3" stroke-linecap="round"/><circle cx="14.5" cy="9" r="6" fill="#a9c6e8" stroke="#111" stroke-width="1.6"/></svg>
<svg style="position:absolute;left:151.0px;top:125.69999999999999px" width="24" height="24" viewBox="0 0 24 24"><path d="M1.2 1.2L8.6 1.9L6.5 3.9L9.0 6.4L6.4 9.0L3.9 6.5L1.9 8.6z" fill="#d4141e" stroke="#8a0a12" stroke-width="0.4"/><path d="M23.5 1.2L22.8 8.6L20.8 6.5L18.3 9.0L15.7 6.4L18.2 3.9L16.1 1.9z" fill="#d4141e" stroke="#8a0a12" stroke-width="0.4"/><path d="M23.5 22.5L16.1 21.8L18.2 19.8L15.7 17.3L18.3 14.7L20.8 17.2L22.8 15.1z" fill="#d4141e" stroke="#8a0a12" stroke-width="0.4"/><line x1="2.500" y1="22" x2="9" y2="15.500" stroke="#222" stroke-width="2.800" stroke-linecap="round"/><circle cx="12.700" cy="12" r="4.600" fill="#9fbfe6" stroke="#222" stroke-width="1.500"/></svg>
<svg style="position:absolute;left:185.0px;top:125.69999999999999px" width="24" height="24" viewBox="0 0 24 24"><circle cx="5.800" cy="8.500" r="4.700" fill="#9fbfe6" stroke="#222" stroke-width="1.500"/><path d="M3 7.600L11 1.500V5c5 0 9.500 2.500 9.500 7 0 3-2 6-6 8.500 2-3 2.500-5 1.500-7-1-1.800-2.500-2.500-5-2.500v3.300z" fill="#2a86dc" stroke="#0f4a8c" stroke-width="0.800"/><line x1="12.500" y1="13.500" x2="21.500" y2="21" stroke="#222" stroke-width="3.400" stroke-linecap="round"/></svg>
<svg style="position:absolute;left:219.0px;top:125.69999999999999px" width="24" height="24" viewBox="0 0 24 24"><circle cx="12" cy="3.200" r="1.500" fill="#fff" stroke="#111" stroke-width="0.900"/><path d="M10.500 5.500h3l1.800 7.500-1.300.8-.5 5h-1.200l-.3-2-.3 2h-1.200l-.5-5-1.300-.8z" fill="#fff" stroke="#111" stroke-width="0.900"/><path d="M7.500 18l9.500 5M16.500 18L7 23" stroke="#d83a40" stroke-width="1"/></svg>
<svg style="position:absolute;left:253.0px;top:125.69999999999999px" width="24" height="24" viewBox="0 0 24 24"><path d="M1.500 13c3-5.500 14-8 21-2-4 5-8 7-12 7s-7-2-9-5z" fill="#f8f8f8" stroke="#555" stroke-width="0.600"/><path d="M1.500 12.500c4-6 15-8 21-1.500" fill="none" stroke="#111" stroke-width="1.800"/><path d="M4 7.500c5-4 13-4 17.500 0" fill="none" stroke="#222" stroke-width="1.500"/><circle cx="10.500" cy="12.500" r="4" fill="#111"/><circle cx="9.500" cy="11" r="1" fill="#fff"/><path d="M4 16c3 3.500 10 4 16-1M7 19c3 1.500 7 1.500 10-.5" fill="none" stroke="#aaa" stroke-width="0.800"/></svg>
<svg style="position:absolute;left:287.0px;top:125.69999999999999px" width="24" height="24" viewBox="0 0 24 24"><g fill="#151515"><path d="M3 10c-.8-5 1.500-8 4-8s4 3.500 3.500 8c-.3 2.500-.8 4-1 5l-5.500.5c-.3-1.500-.8-3-1-5.500z"/><path d="M4 16.800l5.500-.5c.5 3-.5 5.200-2.500 5.500s-3-2-3-5z"/><path d="M13.500 7c.5-5 3.500-7 6-6.500s3.500 4 2 8.500c-.8 2.400-1.500 3.800-2 4.800l-5.300-1c.1-1.600-.9-3-.7-5.800z"/><path d="M14 14.200l5.200 1c-.3 3-1.800 4.800-3.800 4.600s-2.200-2.600-1.400-5.600z"/></g><path d="M4.500 13.500l4.500-.5M5 11.500l3.500-.3M15 11l4 1M15.500 9l3.500 1" stroke="#bbb" stroke-width="0.700"/></svg>
<div style="position:absolute;left:317px;top:118.69999999999999px;width:1px;height:38.0px;background:#dadada;"></div>
<div style="position:absolute;left:322px;top:122.69999999999999px;width:2px;height:30.0px;background:repeating-linear-gradient(#cbcbcb 0 2px,transparent 2px 4px)"></div>
<svg style="position:absolute;left:333.0px;top:125.69999999999999px" width="24" height="24" viewBox="0 0 24 24"><path d="M2.500 22l2.200-6.500L18.500 2c.8-.6 2 .2 2.800 1s1.200 1.800.6 2.500L8.500 19.500z" fill="#c8202c" stroke="#5a0a10" stroke-width="0.700"/><path d="M2.500 22l2.200-6.500 3.800 4z" fill="#e0c8a8" stroke="#5a0a10" stroke-width="0.500"/><path d="M2.500 22l1-3 1.700 1.900z" fill="#222"/><path d="M6 16.500L19.500 3" stroke="#e86068" stroke-width="1"/><path d="M17.500 3l3.500 3.500" stroke="#666" stroke-width="1.400"/></svg>
<svg style="position:absolute;left:367.0px;top:125.69999999999999px" width="24" height="24" viewBox="0 0 24 24"><path d="M3 21C1 14 4 8.500 7 8.500c4 0 1.500 10.500 5.500 10.500S14 6 17.500 6c2 0 3-1.500 3.500-3.500" fill="none" stroke="#7a0a12" stroke-width="2.300" stroke-linecap="round"/><path d="M3 21C1 14 4 8.500 7 8.500c4 0 1.500 10.500 5.500 10.500S14 6 17.500 6c2 0 3-1.500 3.500-3.500" fill="none" stroke="#d4141e" stroke-width="1.300" stroke-linecap="round"/><circle cx="3" cy="21" r="1.600" fill="#d4141e" stroke="#7a0a12" stroke-width="0.500"/><circle cx="21" cy="2.500" r="1.600" fill="#d4141e" stroke="#7a0a12" stroke-width="0.500"/></svg>
<svg style="position:absolute;left:401.0px;top:125.69999999999999px" width="24" height="24" viewBox="0 0 24 24"><rect x="4" y="3" width="15.500" height="18" fill="#8e8c7c" stroke="#4a483c"/><path d="M4 21L19.500 3" stroke="#e8404c" stroke-width="2.400" fill="none"/><path d="M4 21L19.500 3" stroke="#fbe4e6" stroke-width="0.900" fill="none"/><circle cx="4" cy="21" r="1.4" fill="#d8121a"/><circle cx="19.5" cy="3" r="1.4" fill="#d8121a"/></svg>
<svg style="position:absolute;left:435.0px;top:125.69999999999999px" width="24" height="24" viewBox="0 0 24 24"><rect x="4.500" y="3" width="15" height="18" fill="#8e8c7c" stroke="#4a483c"/><path d="M4.500 3v18h15" stroke="#e8404c" stroke-width="1.200" fill="none"/><path d="M4.500 8.500c8 0 14 5 14.500 12.500" stroke="#e8404c" stroke-width="2.400" fill="none"/><path d="M4.500 8.500c8 0 14 5 14.500 12.500" stroke="#fbe4e6" stroke-width="0.900" fill="none"/><circle cx="4.5" cy="3" r="1.4" fill="#d8121a"/><circle cx="4.5" cy="21" r="1.4" fill="#d8121a"/><circle cx="19.5" cy="21" r="1.4" fill="#d8121a"/><circle cx="4.5" cy="8.5" r="1.4" fill="#d8121a"/></svg>
<svg style="position:absolute;left:469.0px;top:125.69999999999999px" width="24" height="24" viewBox="0 0 24 24"><circle cx="12" cy="12.500" r="10" fill="#8e8c7c" stroke="#3a382e" stroke-width="1.100"/><path d="M12 12.500l7.500-7" stroke="#e8404c" stroke-width="2.400" fill="none"/><path d="M12 12.500l7.500-7" stroke="#fbe4e6" stroke-width="0.900" fill="none"/><circle cx="12" cy="12.5" r="1.4" fill="#d8121a"/><circle cx="19.5" cy="5.5" r="1.4" fill="#d8121a"/></svg>
<svg style="position:absolute;left:503.0px;top:125.69999999999999px" width="24" height="24" viewBox="0 0 24 24"><circle cx="12" cy="12.500" r="10.300" fill="none" stroke="#e8404c" stroke-width="1"/><path d="M10 2.500l9 2.500 3 8-5 8-9 1-6-6.500 1-9z" fill="#8e8c7c" stroke="#3a382e"/><path d="M12 12.500l8-6.500" stroke="#e8404c" stroke-width="2.400" fill="none"/><path d="M12 12.500l8-6.500" stroke="#fbe4e6" stroke-width="0.900" fill="none"/><circle cx="12" cy="12.5" r="1.4" fill="#d8121a"/><circle cx="20" cy="6" r="1.4" fill="#d8121a"/></svg>
<svg style="position:absolute;left:537.0px;top:125.69999999999999px" width="24" height="24" viewBox="0 0 24 24"><path d="M3.500 21.500C14 20.500 21 13 21.500 3" fill="none" stroke="#222" stroke-width="1.400"/><path d="M3.500 3h18L3.500 21.500" fill="none" stroke="#e8303a" stroke-width="1.300"/><circle cx="3.5" cy="3" r="1.4" fill="#d8121a"/><circle cx="21.5" cy="3" r="1.4" fill="#d8121a"/><circle cx="3.5" cy="21.5" r="1.4" fill="#d8121a"/></svg>
<svg style="position:absolute;left:571.0px;top:125.69999999999999px" width="24" height="24" viewBox="0 0 24 24"><path d="M5.500 22C-1 13 7 0 21 6" fill="none" stroke="#222" stroke-width="1.400"/><path d="M5.500 22L21 6M6 5.500l8.500 9.500" fill="none" stroke="#e8303a" stroke-width="1.300"/><circle cx="5.5" cy="22" r="1.4" fill="#d8121a"/><circle cx="21" cy="6" r="1.4" fill="#d8121a"/><circle cx="6" cy="5.5" r="1.4" fill="#d8121a"/></svg>
<svg style="position:absolute;left:605.0px;top:125.69999999999999px" width="24" height="24" viewBox="0 0 24 24"><path d="M9 3.500c9-2 15 7 11 14.500-3 5-11 5-15 0" fill="none" stroke="#222" stroke-width="1.400"/><path d="M9 3.500l8 17.500L4 15.500" fill="none" stroke="#e8303a" stroke-width="1.300"/><circle cx="9" cy="3.5" r="1.4" fill="#d8121a"/><circle cx="17" cy="21" r="1.4" fill="#d8121a"/><circle cx="4" cy="15.5" r="1.4" fill="#d8121a"/></svg>
<svg style="position:absolute;left:639.0px;top:125.69999999999999px" width="24" height="24" viewBox="0 0 24 24"><path d="M4 4h17C20.500 13.500 14 20.500 4 21.500z" fill="#8e8c7c" stroke="#3a382e"/><path d="M4 4h17" stroke="#e8303a" stroke-width="1.200"/><path d="M4 21.500L21 4" stroke="#e8404c" stroke-width="2.400" fill="none"/><path d="M4 21.500L21 4" stroke="#fbe4e6" stroke-width="0.900" fill="none"/><circle cx="4" cy="4" r="1.4" fill="#d8121a"/><circle cx="21" cy="4" r="1.4" fill="#d8121a"/><circle cx="4" cy="21.5" r="1.4" fill="#d8121a"/></svg>
<div style="position:absolute;left:669px;top:118.69999999999999px;width:1px;height:38.0px;background:#dadada;"></div>
<div style="position:absolute;left:674px;top:122.69999999999999px;width:2px;height:30.0px;background:repeating-linear-gradient(#cbcbcb 0 2px,transparent 2px 4px)"></div>
<svg style="position:absolute;left:685.0px;top:125.69999999999999px" width="24" height="24" viewBox="0 0 24 24"><path d="M7 2.500v17l4-3.800 3 6.800 2.800-1.300-3-6.500H19.500z" fill="#000" transform="translate(12 12) scale(.8) translate(-12.500 -12)"/></svg>
<div style="position:absolute;left:716px;top:122.69999999999999px;width:1px;height:30.0px;background:#a0a0a0;"></div>
<svg style="position:absolute;left:726.0px;top:125.69999999999999px" width="24" height="24" viewBox="0 0 24 24"><path d="M2.500 10.800L14.800 14.500 11.600 23.800.6 17.700z" fill="#f86c96" stroke="#3a1a26" stroke-width="0.900" stroke-linejoin="round"/><path d="M2.500 10.800L14.800 14.500 23 3.100 13.700.6z" fill="#f9aac2" stroke="#3a1a26" stroke-width="0.900" stroke-linejoin="round"/><path d="M14.800 14.500L23 3.100 22.200 7 11.600 23.800z" fill="#c8607f" stroke="#3a1a26" stroke-width="0.900" stroke-linejoin="round"/><path d="M11.500 9.500l5-4.500" stroke="#d06088" stroke-width="1.500"/><path d="M3 11.500l11.500 3.500" stroke="#fcd0dc" stroke-width="0.800"/></svg>
<svg style="position:absolute;left:763.0px;top:125.69999999999999px" width="24" height="24" viewBox="0 0 24 24"><path d="M2.500 22l2.200-6.500L18.500 2c.8-.6 2 .2 2.800 1s1.200 1.800.6 2.500L8.500 19.500z" fill="#c8202c" stroke="#5a0a10" stroke-width="0.700"/><path d="M2.500 22l2.200-6.500 3.800 4z" fill="#e0c8a8" stroke="#5a0a10" stroke-width="0.500"/><path d="M2.500 22l1-3 1.700 1.900z" fill="#222"/><path d="M6 16.500L19.500 3" stroke="#e86068" stroke-width="1"/><path d="M17.500 3l3.500 3.500" stroke="#666" stroke-width="1.400"/></svg>
<svg style="position:absolute;left:795px;top:132.2px" width="12" height="6" viewBox="0 0 12 6"><path d="M0 0h12L6 6z" fill="#111"/></svg>
<svg style="position:absolute;left:818.0px;top:125.69999999999999px" width="24" height="24" viewBox="0 0 24 24"><path d="M4 4h17C20.500 13.500 14 20.500 4 21.500z" fill="#8e8c7c" stroke="#3a382e"/><path d="M4 4h17" stroke="#e8303a" stroke-width="1.200"/><path d="M4 21.500L21 4" stroke="#e8404c" stroke-width="2.400" fill="none"/><path d="M4 21.500L21 4" stroke="#fbe4e6" stroke-width="0.900" fill="none"/><circle cx="4" cy="4" r="1.4" fill="#d8121a"/><circle cx="21" cy="4" r="1.4" fill="#d8121a"/><circle cx="4" cy="21.5" r="1.4" fill="#d8121a"/></svg>
<svg style="position:absolute;left:851px;top:132.2px" width="12" height="6" viewBox="0 0 12 6"><path d="M0 0h12L6 6z" fill="#111"/></svg>
<svg style="position:absolute;left:874.0px;top:125.69999999999999px" width="24" height="24" viewBox="0 0 24 24"><rect x="4" y="3" width="15.500" height="18" fill="#8e8c7c" stroke="#4a483c"/><path d="M4 21L19.500 3" stroke="#e8404c" stroke-width="2.400" fill="none"/><path d="M4 21L19.500 3" stroke="#fbe4e6" stroke-width="0.900" fill="none"/><circle cx="4" cy="21" r="1.4" fill="#d8121a"/><circle cx="19.5" cy="3" r="1.4" fill="#d8121a"/></svg>
<svg style="position:absolute;left:907px;top:132.2px" width="12" height="6" viewBox="0 0 12 6"><path d="M0 0h12L6 6z" fill="#111"/></svg>
<div style="position:absolute;left:926px;top:122.69999999999999px;width:1px;height:30.0px;background:#a0a0a0;"></div>
<svg style="position:absolute;left:937.0px;top:125.69999999999999px" width="24" height="24" viewBox="0 0 24 24"><path d="M1 15l11-4.500L23 15v3l-11 4.500L1 18z" fill="#5c5a50" stroke="#222" stroke-width="0.900"/><path d="M1 15l11-4.500L23 15l-11 4.500z" fill="#8e8c7c" stroke="#222" stroke-width="0.900"/><path d="M12 2.500l4.300 5.500h-2.300v7h-4V8H7.700z" fill="#d4141e" stroke="#7a0a12" stroke-width="0.600"/></svg>
<svg style="position:absolute;left:971.0px;top:125.69999999999999px" width="24" height="24" viewBox="0 0 24 24"><path d="M2.500 8C8 .5 19 2.500 21.500 12c.8 3.500.2 7-1 10" fill="none" stroke="#d4141e" stroke-width="1.700"/><path d="M5 14c2-4 7-4.500 9.500-1 1.500 2.500 1 5.500 0 8.500" fill="none" stroke="#222" stroke-width="1.300"/><path d="M21 3.500l-1.500 8.500-2.500-2.200-4.500 5.200-2.800-2.300 4.600-5.200-2.600-2.200z" fill="#d4141e" stroke="#7a0a12" stroke-width="0.500"/></svg>
<svg style="position:absolute;left:1005.0px;top:125.69999999999999px" width="24" height="24" viewBox="0 0 24 24"><rect x="9.800" y="9.800" width="4.400" height="4.400" fill="#d4141e"/><path d="M12 .6L16.300 6.600H14.100V10.300H9.900V6.600H7.700z" fill="#d4141e" stroke="#f6f6f6" stroke-width="2" paint-order="stroke" stroke-linejoin="round" transform="rotate(0 12 12)"/><path d="M12 .6L16.300 6.600H14.100V10.300H9.900V6.600H7.700z" fill="#d4141e" stroke="#f6f6f6" stroke-width="2" paint-order="stroke" stroke-linejoin="round" transform="rotate(90 12 12)"/><path d="M12 .6L16.300 6.600H14.100V10.300H9.900V6.600H7.700z" fill="#d4141e" stroke="#f6f6f6" stroke-width="2" paint-order="stroke" stroke-linejoin="round" transform="rotate(180 12 12)"/><path d="M12 .6L16.300 6.600H14.100V10.300H9.900V6.600H7.700z" fill="#d4141e" stroke="#f6f6f6" stroke-width="2" paint-order="stroke" stroke-linejoin="round" transform="rotate(270 12 12)"/><path d="M12 .6L16.300 6.600H14.100V10.300H9.900V6.600H7.700z" fill="#d4141e" transform="rotate(0 12 12)"/><path d="M12 .6L16.300 6.600H14.100V10.300H9.900V6.600H7.700z" fill="#d4141e" transform="rotate(90 12 12)"/><path d="M12 .6L16.300 6.600H14.100V10.300H9.900V6.600H7.700z" fill="#d4141e" transform="rotate(180 12 12)"/><path d="M12 .6L16.300 6.600H14.100V10.300H9.900V6.600H7.700z" fill="#d4141e" transform="rotate(270 12 12)"/></svg>
<svg style="position:absolute;left:1039.0px;top:125.69999999999999px" width="24" height="24" viewBox="0 0 24 24"><g fill="#d4141e" stroke="#7a0a12" stroke-width="0.500"><path d="M1.500 11.500C1.500 5 8 1 14.500 3.500l1.200-2.800 5.300 7.800-8.800 1.200 1.200-2.700C9.500 5.500 6.500 8 6.500 11.500z"/><path d="M22.500 12.500c0 6.500-6.500 10.500-13 8l-1.200 2.800L3 15.500l8.800-1.200-1.200 2.700c3.900 1.500 6.900-1 6.900-4.500z"/></g></svg>
<svg style="position:absolute;left:1073.0px;top:125.69999999999999px" width="24" height="24" viewBox="0 0 24 24"><rect x="2.500" y="2" width="19.500" height="19.500" fill="#fff" stroke="#e8303a" stroke-width="1"/><rect x="2.500" y="7" width="14.500" height="14.500" fill="#8e8c7c" stroke="#2a2a2a" stroke-width="1"/><path d="M23 1l-1.800 9-2.700-2.700-5 5-3-3 5-5L12.800 1.600z" fill="#d4141e" stroke="#7a0a12" stroke-width="0.500"/></svg>
<div style="position:absolute;left:1105px;top:122.69999999999999px;width:1px;height:30.0px;background:#a0a0a0;"></div>
<svg style="position:absolute;left:1115.0px;top:125.69999999999999px" width="24" height="24" viewBox="0 0 24 24"><path d="M10.500 14l3 3L5 23l-3-2.500z" fill="#f0e020" stroke="#222" stroke-width="0.900"/><path d="M2 20.500L5 23l-1.200.8-2.600-2.300z" fill="#111"/><path d="M9.500 9C9.500 5 13 1.500 17 1.500l4 1c2 1.500 2.500 5.500 1 8.500l-3 5c-2 1.500-5 1.500-7 0z" fill="#3a3832" stroke="#111" stroke-width="0.900"/><ellipse cx="16.800" cy="8.500" rx="3.800" ry="5.300" transform="rotate(28 16.800 8.500)" fill="#f4e81c" stroke="#77756a" stroke-width="1.200"/></svg>
<svg style="position:absolute;left:1149.0px;top:125.69999999999999px" width="24" height="24" viewBox="0 0 24 24"><rect x="9" y="2.500" width="14" height="12" fill="#fff" stroke="#222" stroke-width="1.100"/><text x="16" y="12" font-size="9" font-family="Liberation Serif" font-weight="bold" fill="#222" text-anchor="middle">A1</text><path d="M9 9H5.500v11" fill="none" stroke="#444" stroke-width="1.100"/><path d="M5.500 23.500L3.300 19h4.400z" fill="#111"/></svg>
<svg style="position:absolute;left:1181.0px;top:125.69999999999999px" width="24" height="24" viewBox="0 0 24 24"><path d="M3.500 8L8 2.500 13 .8l3.700 1.500L23 11.800l-.1 5.900-6.200 4-7.900-4.500z" fill="#3a3a34" stroke="#111" stroke-width="1"/><path d="M5 8l4-4.500L13 2l3 1.500-3 5.500-4 2z" fill="#8c9c9c"/><path d="M11 15.500l5-3 3.500 5-4.500 3z" fill="#ecdcae" stroke="#222" stroke-width="0.700"/><path d="M16 12.500l5.500-2.500.5 7-2.500.5z" fill="#8e8c7c" stroke="#222" stroke-width="0.600"/><path d="M17 3.500c4-1 6 2 4 5.500" fill="none" stroke="#222" stroke-width="1.200"/><path d="M1 17C1 11 5 7.500 12 7l2 1.500c-5 1.500-6.500 4.500-6 9 .3 3-1.500 4.500-4 4-2-.5-3-2-3-4.500z" fill="#f6b80c" stroke="#3a2a00" stroke-width="0.900"/></svg>
<div style="position:absolute;left:1214px;top:122.69999999999999px;width:1px;height:30.0px;background:#a0a0a0;"></div>
<svg style="position:absolute;left:1224.0px;top:125.69999999999999px" width="24" height="24" viewBox="0 0 24 24"><path d="M4.500 8.500C1 12 2 17 12 19.500" stroke="#c2182a" stroke-width="5.500" fill="none"/><path d="M9.500 15l6.500 5.500-7.500 3.500z" fill="#c2182a"/><path d="M4 8c2-1.500 4-2 6-2" stroke="#e86070" stroke-width="2" fill="none"/><path d="M13.500 7.500c5-1.500 9.500 2 8 6.500-.8 2.500-3 4-6 5" stroke="#2a9a55" stroke-width="5" fill="none"/><path d="M16 2.500L9.500 8l7 3z" fill="#2a9a55"/><path d="M15 7c3 0 5 1.500 5.500 3.500" stroke="#7ad8a0" stroke-width="1.600" fill="none"/><ellipse cx="11" cy="12.500" rx="3.500" ry="1.600" fill="#fff"/><path d="M12 .5v23.500" stroke="#111" stroke-width="2.200"/></svg>
<div style="position:absolute;left:1254.3px;top:121.39999999999999px;width:33.600000000000136px;height:32.39999999999999px;background:#cce4f7;border:1px solid #b6d6f0;box-sizing:border-box"></div>
<svg style="position:absolute;left:1259.0px;top:125.69999999999999px" width="24" height="24" viewBox="0 0 24 24"><path d="M2.500 19.500L6.500 10.500C8 7 10 5 12 4c2-1.500 5-2 8-1.500l3.500 2c.5 1.500-1.500 3-3 4L18 10.500c-1 1.500-1 2.500.5 3l3.500 1.500c1.500 1 1 2.500-.5 2.500L15 18.500 8.500 23.500z" fill="#f6deb0" stroke="#3a3020" stroke-width="1"/><path d="M12.500 8L16 3.500M15 9l4-5M17.500 10l4-4.500" stroke="#6a5020" stroke-width="0.900"/><path d="M2.500 19.500l6 4" stroke="#f6deb0" stroke-width="1.600"/></svg>
<svg style="position:absolute;left:1293.0px;top:125.69999999999999px" width="24" height="24" viewBox="0 0 24 24"><line x1="4" y1="20.5" x2="11" y2="13" stroke="#111" stroke-width="3" stroke-linecap="round"/><circle cx="14.5" cy="9" r="6" fill="#a9c6e8" stroke="#111" stroke-width="1.6"/></svg>
<svg style="position:absolute;left:1327.0px;top:125.69999999999999px" width="24" height="24" viewBox="0 0 24 24"><path d="M1.2 1.2L8.6 1.9L6.5 3.9L9.0 6.4L6.4 9.0L3.9 6.5L1.9 8.6z" fill="#d4141e" stroke="#8a0a12" stroke-width="0.4"/><path d="M23.5 1.2L22.8 8.6L20.8 6.5L18.3 9.0L15.7 6.4L18.2 3.9L16.1 1.9z" fill="#d4141e" stroke="#8a0a12" stroke-width="0.4"/><path d="M23.5 22.5L16.1 21.8L18.2 19.8L15.7 17.3L18.3 14.7L20.8 17.2L22.8 15.1z" fill="#d4141e" stroke="#8a0a12" stroke-width="0.4"/><line x1="2.500" y1="22" x2="9" y2="15.500" stroke="#222" stroke-width="2.800" stroke-linecap="round"/><circle cx="12.700" cy="12" r="4.600" fill="#9fbfe6" stroke="#222" stroke-width="1.500"/></svg>
<div style="position:absolute;left:1359px;top:122.69999999999999px;width:1px;height:30.0px;background:#a0a0a0;"></div>
<svg style="position:absolute;left:1370.0px;top:125.69999999999999px" width="24" height="24" viewBox="0 0 24 24"><path d="M11.200 1.300L20.300 6.550V17.050L11.200 22.300 2.100 17.050V6.550z" fill="#f0f0f0" stroke="#14598f" stroke-width="2.300" stroke-linejoin="round"/><path d="M11.200 3.900L18 7.850v7.900L11.200 19.700 4.400 15.750V7.850z" fill="none" stroke="#fff" stroke-width="1"/><path d="M11.200 6L16.400 9v6L11.200 18 6 15V9z" fill="#fff" stroke="#14598f" stroke-width="1.900" stroke-linejoin="round"/><path d="M11.200 12v4.500M11.200 12l3.900-2.200M11.200 12L7.300 9.800" stroke="#14598f" stroke-width="1.600"/><path d="M18.200 8.500h3.200v9.700h2.700L19.800 24.900 15.500 18.200h2.700z" fill="#fff" stroke="#f0f0f0" stroke-width="3" stroke-linejoin="round"/><path d="M18.200 8.500h3.200v9.700h2.700L19.800 24.900 15.500 18.200h2.700z" fill="#fff" stroke="#14598f" stroke-width="1.300" stroke-linejoin="round"/></svg>
<svg style="position:absolute;left:1404.0px;top:125.69999999999999px" width="24" height="24" viewBox="0 0 24 24"><g fill="none" stroke="#14598f" stroke-width="2.600" stroke-linejoin="round"><path d="M1.500 5.500c4 0 6.500 4 10.500 4s6.500-5 10-5.500"/><path d="M1.500 11.500c4 0 6.500 2.500 10.500 2.500s6.500-3.500 10-4"/><path d="M1.500 17c4 0 7-2.500 10.500-3"/><path d="M1.500 21.500c3 0 5.500-1.500 7.500-3.500"/></g><path d="M18.500 2l4.500 1.500-2 3.500z" fill="#14598f"/><path d="M20.500 8l2.500 1-1 3z" fill="#14598f"/><circle cx="18.300" cy="18.700" r="5.300" fill="#fff" stroke="#14598f" stroke-width="1.500"/><path d="M15.600 18a2.800 2.800 0 0 1 4.900-1.100M21 19.400a2.800 2.800 0 0 1-4.900 1.100" stroke="#14598f" stroke-width="1.200" fill="none"/><path d="M20.800 15.400v1.900h-1.900M15.800 22v-1.900h1.900" stroke="#14598f" stroke-width="1" fill="none"/></svg>
<svg style="position:absolute;left:1438.0px;top:125.69999999999999px" width="24" height="24" viewBox="0 0 24 24"><g fill="#fff" stroke="#14598f" stroke-width="2" stroke-linejoin="round"><path d="M1.500 15.500l9.500-4 9.500 4-9.500 4z"/><path d="M1.500 11.500l9.500-4 9.500 4-9.500 4z"/><path d="M1.500 7.500l9.500-4 9.500 4-9.500 4z"/></g><path d="M6.500 7.500l4.500-1.900 4.500 1.900-4.500 1.900z" fill="#14598f"/><path d="M12.500 15.500h5.500v-3l5.800 5-5.800 5v-3h-5.500z" fill="#fff" stroke="#f0f0f0" stroke-width="2.600"/><path d="M12.500 15.500h5.500v-3l5.800 5-5.800 5v-3h-5.500z" fill="#fff" stroke="#14598f" stroke-width="1.400" stroke-linejoin="round"/></svg>
<div style="position:absolute;left:1469px;top:122.69999999999999px;width:1px;height:30.0px;background:#a0a0a0;"></div>
<svg style="position:absolute;left:1479.0px;top:125.69999999999999px" width="24" height="24" viewBox="0 0 24 24"><g fill="none" stroke="#14598f" stroke-width="2.600" stroke-linejoin="round"><path d="M1.500 5.500c4 0 6.500 4 10.500 4s6.500-5 10-5.500"/><path d="M1.500 11.500c4 0 6.500 2.500 10.500 2.500s6.500-3.500 10-4"/><path d="M1.500 17c4 0 7-2.500 10.500-3"/><path d="M1.500 21.500c3 0 5.500-1.500 7.500-3.500"/></g><path d="M18.500 2l4.500 1.500-2 3.500z" fill="#14598f"/><path d="M20.500 8l2.500 1-1 3z" fill="#14598f"/><circle cx="18.300" cy="18.700" r="4.400" fill="#fff" stroke="#14598f" stroke-width="2.600" stroke-dasharray="2.100 1.350"/><circle cx="18.300" cy="18.700" r="3.500" fill="#fff" stroke="#14598f" stroke-width="1.300"/><circle cx="18.300" cy="18.700" r="1.300" fill="#fff" stroke="#14598f" stroke-width="1"/></svg>
<div style="position:absolute;left:1510px;top:122.69999999999999px;width:1px;height:30.0px;background:#a0a0a0;"></div>
<svg style="position:absolute;left:1523.0px;top:125.69999999999999px" width="24" height="24" viewBox="0 0 24 24"><circle cx="11" cy="11.500" r="10" fill="#fff" stroke="#3a3a3a" stroke-width="1.300"/><circle cx="11" cy="8.500" r="3.600" fill="#fff" stroke="#3a3a3a" stroke-width="1.300"/><path d="M4 18.500c1-4.500 4-5.500 7-5.500s6 1 7 5.500" fill="none" stroke="#3a3a3a" stroke-width="1.300"/><circle cx="18" cy="19" r="5" fill="#5aa02e" stroke="#f0f0f0" stroke-width="0.800"/><path d="M15.500 19l2 2 3.200-3.800" stroke="#fff" stroke-width="1.600" fill="none"/></svg>
<svg style="position:absolute;left:1554px;top:132.2px" width="12" height="6" viewBox="0 0 12 6"><path d="M0 0h12L6 6z" fill="#111"/></svg>
<div style="position:absolute;left:1572px;top:118.69999999999999px;width:1px;height:38.0px;background:#dadada;"></div>
<div style="position:absolute;left:1578px;top:122.69999999999999px;width:2px;height:30.0px;background:repeating-linear-gradient(#cbcbcb 0 2px,transparent 2px 4px)"></div>
<svg style="position:absolute;left:1589.0px;top:125.69999999999999px" width="24" height="24" viewBox="0 0 24 24"><rect x="9.800" y="9.800" width="4.400" height="4.400" fill="#d4141e"/><path d="M12 .6L16.300 6.600H14.100V10.300H9.900V6.600H7.700z" fill="#d4141e" stroke="#f6f6f6" stroke-width="2" paint-order="stroke" stroke-linejoin="round" transform="rotate(0 12 12)"/><path d="M12 .6L16.300 6.600H14.100V10.300H9.900V6.600H7.700z" fill="#d4141e" stroke="#f6f6f6" stroke-width="2" paint-order="stroke" stroke-linejoin="round" transform="rotate(90 12 12)"/><path d="M12 .6L16.300 6.600H14.100V10.300H9.900V6.600H7.700z" fill="#d4141e" stroke="#f6f6f6" stroke-width="2" paint-order="stroke" stroke-linejoin="round" transform="rotate(180 12 12)"/><path d="M12 .6L16.300 6.600H14.100V10.300H9.900V6.600H7.700z" fill="#d4141e" stroke="#f6f6f6" stroke-width="2" paint-order="stroke" stroke-linejoin="round" transform="rotate(270 12 12)"/><path d="M12 .6L16.300 6.600H14.100V10.300H9.900V6.600H7.700z" fill="#d4141e" transform="rotate(0 12 12)"/><path d="M12 .6L16.300 6.600H14.100V10.300H9.900V6.600H7.700z" fill="#d4141e" transform="rotate(90 12 12)"/><path d="M12 .6L16.300 6.600H14.100V10.300H9.900V6.600H7.700z" fill="#d4141e" transform="rotate(180 12 12)"/><path d="M12 .6L16.300 6.600H14.100V10.300H9.900V6.600H7.700z" fill="#d4141e" transform="rotate(270 12 12)"/></svg>
<svg style="position:absolute;left:1623.0px;top:125.69999999999999px" width="24" height="24" viewBox="0 0 24 24"><path d="M1 15l11-4.500L23 15v3l-11 4.500L1 18z" fill="#5c5a50" stroke="#222" stroke-width="0.900"/><path d="M1 15l11-4.500L23 15l-11 4.500z" fill="#8e8c7c" stroke="#222" stroke-width="0.900"/><path d="M12 2.500l4.300 5.500h-2.300v7h-4V8H7.700z" fill="#d4141e" stroke="#7a0a12" stroke-width="0.600"/></svg>
<svg style="position:absolute;left:1657.0px;top:125.69999999999999px" width="24" height="24" viewBox="0 0 24 24"><g fill="#d4141e" stroke="#7a0a12" stroke-width="0.500"><path d="M1.500 11.500C1.500 5 8 1 14.500 3.500l1.200-2.800 5.300 7.800-8.800 1.200 1.200-2.700C9.500 5.500 6.500 8 6.500 11.500z"/><path d="M22.500 12.500c0 6.500-6.500 10.500-13 8l-1.200 2.800L3 15.500l8.800-1.200-1.200 2.700c3.900 1.500 6.900-1 6.900-4.500z"/></g></svg>
<svg style="position:absolute;left:1691.0px;top:125.69999999999999px" width="24" height="24" viewBox="0 0 24 24"><path d="M2 10c1-6 10-9 17-4l3 3-4 2c-4-2-8-1.500-9 1.500-.8 2.500.5 5 4 5.500l-1 4.500C5 22 1 16 2 10z" fill="#5e5c52" stroke="#1a1a1a" stroke-width="1"/><path d="M4 9.500c2-4 9-6 14-2.500" fill="none" stroke="#d4141e" stroke-width="2.800"/><path d="M22 9.500l-1.500 9-3-2c-2 0-3.500.5-4.500 2l-3.500-3c2-3 4.500-4 7.500-3.500l-2-2.500z" fill="#d4141e" stroke="#7a0a12" stroke-width="0.500"/><path d="M8 13c2-2 4-2.500 6-2.500l-1.500 2.500c-1.500 0-3 .8-3.500 2z" fill="#d4141e"/></svg>
<svg style="position:absolute;left:1725.0px;top:125.69999999999999px" width="24" height="24" viewBox="0 0 24 24"><rect x="2.500" y="2" width="19.500" height="19.500" fill="#fff" stroke="#e8303a" stroke-width="1"/><rect x="2.500" y="7" width="14.500" height="14.500" fill="#8e8c7c" stroke="#2a2a2a" stroke-width="1"/><path d="M23 1l-1.800 9-2.700-2.700-5 5-3-3 5-5L12.800 1.600z" fill="#d4141e" stroke="#7a0a12" stroke-width="0.500"/></svg>
<svg style="position:absolute;left:1759.0px;top:125.69999999999999px" width="24" height="24" viewBox="0 0 24 24"><path d="M2.500 8C8 .5 19 2.500 21.500 12c.8 3.500.2 7-1 10" fill="none" stroke="#d4141e" stroke-width="1.700"/><path d="M5 14c2-4 7-4.500 9.500-1 1.500 2.500 1 5.500 0 8.500" fill="none" stroke="#222" stroke-width="1.300"/><path d="M21 3.500l-1.500 8.500-2.500-2.200-4.500 5.200-2.800-2.300 4.600-5.200-2.600-2.200z" fill="#d4141e" stroke="#7a0a12" stroke-width="0.500"/></svg>
<div style="position:absolute;left:1789px;top:118.69999999999999px;width:1px;height:38.0px;background:#dadada;"></div>
<div style="position:absolute;left:1795px;top:122.69999999999999px;width:2px;height:30.0px;background:repeating-linear-gradient(#cbcbcb 0 2px,transparent 2px 4px)"></div>
<svg style="position:absolute;left:1805.0px;top:125.69999999999999px" width="24" height="24" viewBox="0 0 24 24"><path d="M10.500 14l3 3L5 23l-3-2.500z" fill="#f0e020" stroke="#222" stroke-width="0.900"/><path d="M2 20.500L5 23l-1.200.8-2.600-2.300z" fill="#111"/><path d="M9.500 9C9.500 5 13 1.500 17 1.500l4 1c2 1.500 2.500 5.500 1 8.500l-3 5c-2 1.500-5 1.500-7 0z" fill="#3a3832" stroke="#111" stroke-width="0.900"/><ellipse cx="16.800" cy="8.500" rx="3.800" ry="5.300" transform="rotate(28 16.800 8.500)" fill="#f4e81c" stroke="#77756a" stroke-width="1.200"/></svg>
<div style="position:absolute;left:1838px;top:118.69999999999999px;width:1px;height:38.0px;background:#dadada;"></div>
<div style="position:absolute;left:1845px;top:122.69999999999999px;width:2px;height:30.0px;background:repeating-linear-gradient(#cbcbcb 0 2px,transparent 2px 4px)"></div>
<svg style="position:absolute;left:1854.0px;top:125.69999999999999px" width="24" height="24" viewBox="0 0 24 24"><path d="M3 6l12-4 7 5-2 12-10 3-8-6z" fill="#f6c0b8" stroke="#b04a40"/><path d="M6 9c3-3 8-3 10 0s0 7-4 7-8-3-6-7zM9 10c2-1.500 4-1 5 0s0 3-2 3-4-1-3-3z" fill="none" stroke="#c8584a" stroke-width="1"/><path d="M3 6l8 5 11-4M11 11l-1 11" stroke="#b04a40" fill="none"/></svg>
<div style="position:absolute;left:1880px;top:118.69999999999999px;width:1px;height:38.0px;background:#dadada;"></div>
<div style="position:absolute;left:1886px;top:122.69999999999999px;width:2px;height:30.0px;background:repeating-linear-gradient(#cbcbcb 0 2px,transparent 2px 4px)"></div>
<svg style="position:absolute;left:1894.0px;top:125.69999999999999px" width="24" height="24" viewBox="0 0 24 24"><circle cx="11" cy="12" r="6.500" fill="#fff" stroke="#222" stroke-width="1.200"/><path d="M1 12h20M11 2v20" stroke="#222" stroke-width="1.200"/><path d="M23.500 12l-4-3.500v7z" fill="#222"/><text x="7" y="11" font-size="4.500" font-family="Liberation Sans" fill="#222">C</text><text x="12" y="17" font-size="4.500" font-family="Liberation Sans" fill="#222">A B</text></svg>
<div style="position:absolute;left:426px;top:160.8px;width:2px;height:30.0px;background:repeating-linear-gradient(#cbcbcb 0 2px,transparent 2px 4px)"></div>
<svg style="position:absolute;left:436.0px;top:163.8px" width="24" height="24" viewBox="0 0 24 24"><path d="M2.500 5.500l4.500 1 3 2.500 1.500-1.500 3 .5 1.500 1.500 2.500 1 2 4.500-1.500 4-4 2-3.500-1-2.500-3.500-3-2.500L3 10.500l2.500-.5z" fill="#fff" stroke="#333" stroke-width="1" stroke-linejoin="round"/><path d="M9.500 9l2.500 4M12.500 8l2 3.500M15.500 9.500l1.500 3" fill="none" stroke="#333" stroke-width="0.800"/></svg>
<svg style="position:absolute;left:468.0px;top:163.8px" width="24" height="24" viewBox="0 0 24 24"><rect x="3" y="2.500" width="18" height="19" fill="#fff" stroke="#222" stroke-width="1.300"/><rect x="3" y="2.500" width="18" height="4.500" fill="#c8202a"/><rect x="16" y="1" width="6" height="5" fill="#c8202a"/><path d="M6 10.500h11M6 13.500h11M6 16.500h9" stroke="#222" stroke-width="1.300"/></svg>
<svg style="position:absolute;left:502.0px;top:163.8px" width="24" height="24" viewBox="0 0 24 24"><rect x="2" y="4" width="7" height="7" fill="#2eb82e" stroke="#156a15"/><rect x="2" y="13" width="7" height="7" fill="#2eb82e" stroke="#156a15"/><path d="M11 3l11 9-11 9z" fill="#2eb82e" stroke="#156a15"/></svg>
<div style="position:absolute;left:532px;top:156.8px;width:1px;height:38.0px;background:#dadada;"></div>
<div style="position:absolute;left:541px;top:160.8px;width:2px;height:30.0px;background:repeating-linear-gradient(#cbcbcb 0 2px,transparent 2px 4px)"></div>
<svg style="position:absolute;left:553.0px;top:163.8px" width="24" height="24" viewBox="0 0 24 24"><circle cx="8" cy="6" r="4" fill="#333" stroke="#000"/><circle cx="16" cy="6" r="4" fill="#333" stroke="#000"/><rect x="5" y="10" width="14" height="9" rx="1" fill="#222" stroke="#000"/><path d="M19 13l4-2v7l-4-2z" fill="#222" stroke="#000"/><path d="M8 19l-3 4M16 19l3 4M12 19v4" stroke="#000" stroke-width="1.200"/><circle cx="8" cy="6" r="1.300" fill="#ddd"/><circle cx="16" cy="6" r="1.300" fill="#ddd"/><circle cx="5" cy="19" r="3.800" fill="#fff" stroke="#111"/><path d="M5 16.800v4.400M2.800 19h4.400" stroke="#111" stroke-width="1.100"/></svg>
<svg style="position:absolute;left:586.0px;top:163.8px" width="24" height="24" viewBox="0 0 24 24"><circle cx="12" cy="12" r="9" fill="#9a9a9a" stroke="#808080"/><ellipse cx="12" cy="11" rx="7" ry="3" fill="#b8b8b8" stroke="#888"/><circle cx="12" cy="12" r="2" fill="#ddd" stroke="#888"/><path d="M4 15c4 3 12 3 16 0" fill="none" stroke="#bbb"/></svg>
<svg style="position:absolute;left:620.0px;top:163.8px" width="24" height="24" viewBox="0 0 24 24"><circle cx="8" cy="6" r="4" fill="#9a9a9a" stroke="#777"/><circle cx="16" cy="6" r="4" fill="#9a9a9a" stroke="#777"/><rect x="5" y="10" width="14" height="9" rx="1" fill="#8a8a8a" stroke="#777"/><path d="M19 13l4-2v7l-4-2z" fill="#8a8a8a" stroke="#777"/><path d="M8 19l-3 4M16 19l3 4M12 19v4" stroke="#777" stroke-width="1.200"/><circle cx="8" cy="6" r="1.300" fill="#ddd"/><circle cx="16" cy="6" r="1.300" fill="#ddd"/><rect x="3" y="15" width="5" height="6" rx="1" fill="#aaa" stroke="#777"/></svg>
<svg style="position:absolute;left:654.0px;top:163.8px" width="24" height="24" viewBox="0 0 24 24"><circle cx="8" cy="6" r="4" fill="#9a9a9a" stroke="#777"/><circle cx="16" cy="6" r="4" fill="#9a9a9a" stroke="#777"/><rect x="5" y="10" width="14" height="9" rx="1" fill="#8a8a8a" stroke="#777"/><path d="M19 13l4-2v7l-4-2z" fill="#8a8a8a" stroke="#777"/><path d="M8 19l-3 4M16 19l3 4M12 19v4" stroke="#777" stroke-width="1.200"/><circle cx="8" cy="6" r="1.300" fill="#ddd"/><circle cx="16" cy="6" r="1.300" fill="#ddd"/><rect x="15" y="14" width="6" height="7" rx="1" fill="#bbb" stroke="#777"/></svg>
<svg style="position:absolute;left:688.0px;top:163.8px" width="24" height="24" viewBox="0 0 24 24"><path d="M2 6l15.500 1-1.500 11.500L7.500 22z" fill="#ececec" stroke="#a8a8a8" stroke-width="1"/><path d="M21 3.500L2 6M21 3.500L7.500 22M21 3.500l-5 15M21 3.500l-3.500 3.500M2 6l14 12.500" fill="none" stroke="#a8a8a8" stroke-width="0.800"/><rect x="19.500" y="1" width="3" height="4" fill="#b4b4b4" stroke="#999" stroke-width="0.500" transform="rotate(20 21 3)"/></svg>
<svg style="position:absolute;left:722.0px;top:163.8px" width="24" height="24" viewBox="0 0 24 24"><path d="M2 6l15.500 1-1.500 11.500L7.500 22z" fill="#b4b4b4" stroke="#999" stroke-width="1"/><path d="M2 6l19-2.500L7.500 22z" fill="#c4c4c4" stroke="#999" stroke-width="0.700"/><path d="M21 3.500l-5 15M21 3.500l-3.500 3.500" fill="none" stroke="#999" stroke-width="0.800"/><rect x="19.500" y="1" width="3" height="4" fill="#a8a8a8" stroke="#888" stroke-width="0.500" transform="rotate(20 21 3)"/></svg>
<svg style="position:absolute;left:756.0px;top:163.8px" width="24" height="24" viewBox="0 0 24 24"><rect x="1.500" y="2" width="21" height="20" fill="#111"/><rect x="1.500" y="6" width="21" height="12" fill="#ddd"/><circle cx="12" cy="12" r="6.500" fill="#fff" stroke="#d8121a" stroke-width="2"/><path d="M8.500 8.500l7 7M15.500 8.500l-7 7" stroke="#d8121a" stroke-width="2"/></svg>
<div style="position:absolute;left:786px;top:156.8px;width:1px;height:38.0px;background:#dadada;"></div>
<div style="position:absolute;left:793px;top:160.8px;width:2px;height:30.0px;background:repeating-linear-gradient(#cbcbcb 0 2px,transparent 2px 4px)"></div>
<svg style="position:absolute;left:803.0px;top:163.8px" width="24" height="24" viewBox="0 0 24 24"><path d="M3 6.500c0-1.500.5-2.500 2-2.500h4.500l1.500 2H18c1 0 1.500.5 1.500 1.500v3" fill="#eef0f8" stroke="#4c4c52" stroke-width="1.300"/><path d="M1.500 10.500h19.500l-1 8c-.2 1-1 1.500-2 1.500H4.500c-1 0-1.800-.5-2-1.500z" fill="#eef0f8" stroke="#4c4c52" stroke-width="1.400" stroke-linejoin="round"/><path d="M19.5 3.6l4.0 5.15h-1.92v5.15h-4.16v-5.15h-1.92z" fill="#1a5a8e" stroke="#f0f0f0" stroke-width="0.800" paint-order="stroke"/></svg>
<svg style="position:absolute;left:837.0px;top:163.8px" width="24" height="24" viewBox="0 0 24 24"><rect x="3.600" y="3.600" width="16.800" height="16.800" rx="1" fill="#eef0f8" stroke="#5a5a60" stroke-width="1.700"/><path d="M7.500 12.500l3.500 3.500 6.500-7.500" fill="none" stroke="#5a5a60" stroke-width="1.500"/></svg>
<svg style="position:absolute;left:871.0px;top:163.8px" width="24" height="24" viewBox="0 0 24 24"><path d="M5 17.500c-6 0-6.500-7.500-.5-8C5 3 14 1.500 16.500 7.500c3-.5 5 .5 6.500 2.500 2.500 3.500.5 7.500-4 7.500z" fill="#eef0f8" stroke="#4c4c52" stroke-width="1.200"/><path d="M12 12l4.25 4.75h-2.04v4.75h-4.42v-4.75h-2.04z" fill="#1a5a8e" stroke="#f0f0f0" stroke-width="0.800" paint-order="stroke"/></svg>
<svg style="position:absolute;left:904.0px;top:163.8px" width="24" height="24" viewBox="0 0 24 24"><path d="M3.500 6.500L13 1.500l8 4.500v10.500l-9 5-8.500-4.500z" fill="#eef0f8" stroke="#4c4c52" stroke-width="1.300" stroke-linejoin="round"/><path d="M3.500 6.500l8.500 4.500 9-5M12 11v10.500" fill="none" stroke="#4c4c52" stroke-width="1.100"/><path d="M17.3 21.5l4.0 -4.75h-1.92v-4.75h-4.16v4.75h-1.92z" fill="#1a5a8e" stroke="#f0f0f0" stroke-width="0.800" paint-order="stroke"/></svg>
<svg style="position:absolute;left:938.0px;top:163.8px" width="24" height="24" viewBox="0 0 24 24"><g fill="none" stroke="#15569a" stroke-width="3.300"><path d="M12.800 4.800l5.700 3.300v3.300"/><path d="M18.500 14.800l-5.700 4.300-2.300-1.300"/><path d="M6.800 15.500V8.500l3-1.800"/></g></svg>
<div style="position:absolute;left:550px;top:50px;width:184px;height:8px;background:linear-gradient(90deg,#fffef0 0,#fbe27a 22%,#f6a21e 45%,#f0501a 65%,#e8101a 82%,#f05058 86%,#f8b0b0 92%,#fdeaea 100%);border-top:2px solid #8a8a8a;border-left:2px solid #8a8a8a;box-sizing:border-box"></div>
<div style="position:absolute;left:706px;top:47px;width:3px;height:17px;background:#fff;border:1px solid #b0b0b0;box-sizing:content-box;width:2px"></div>
<span style="position:absolute;left:552px;top:58px;width:12px;text-align:center;font:bold 9px/14px 'Liberation Sans',sans-serif;color:#222">E</span>
<span style="position:absolute;left:566.5px;top:58px;width:12px;text-align:center;font:bold 9px/14px 'Liberation Sans',sans-serif;color:#222">F</span>
<span style="position:absolute;left:582px;top:58px;width:12px;text-align:center;font:bold 9px/14px 'Liberation Sans',sans-serif;color:#222">M</span>
<span style="position:absolute;left:597px;top:58px;width:12px;text-align:center;font:bold 9px/14px 'Liberation Sans',sans-serif;color:#222">A</span>
<span style="position:absolute;left:612px;top:58px;width:12px;text-align:center;font:bold 9px/14px 'Liberation Sans',sans-serif;color:#222">M</span>
<span style="position:absolute;left:626.5px;top:58px;width:12px;text-align:center;font:bold 9px/14px 'Liberation Sans',sans-serif;color:#222">J</span>
<span style="position:absolute;left:641.5px;top:58px;width:12px;text-align:center;font:bold 9px/14px 'Liberation Sans',sans-serif;color:#222">J</span>
<span style="position:absolute;left:657px;top:58px;width:12px;text-align:center;font:bold 9px/14px 'Liberation Sans',sans-serif;color:#222">A</span>
<span style="position:absolute;left:672px;top:58px;width:12px;text-align:center;font:bold 9px/14px 'Liberation Sans',sans-serif;color:#222">S</span>
<span style="position:absolute;left:687px;top:58px;width:12px;text-align:center;font:bold 9px/14px 'Liberation Sans',sans-serif;color:#222">O</span>
<span style="position:absolute;left:702px;top:58px;width:12px;text-align:center;font:bold 9px/14px 'Liberation Sans',sans-serif;color:#222">N</span>
<span style="position:absolute;left:717px;top:58px;width:12px;text-align:center;font:bold 9px/14px 'Liberation Sans',sans-serif;color:#222">D</span>
<div style="position:absolute;left:754px;top:50px;width:184px;height:8px;background:linear-gradient(90deg,#fcfcfc 0,#c0d0e8 25%,#7f9ae0 50%,#5a66e6 62%,#3a3a9a 78%,#10102c 92%,#0a0a1e 100%);border-top:2px solid #8a8a8a;border-left:2px solid #8a8a8a;box-sizing:border-box"></div>
<div style="position:absolute;left:864px;top:47px;width:3px;height:14px;background:#fff;border:1px solid #b0b0b0;box-sizing:content-box;width:2px"></div>
<span style="position:absolute;left:754px;top:59.0px;font:9px/13px 'Liberation Sans',sans-serif;color:#111;white-space:pre;transform-origin:0 50%;transform:scaleX(1.0257);text-shadow:0 0 .4px #111">07:35 AM</span>
<span style="position:absolute;left:828px;top:59.0px;font:9px/13px 'Liberation Sans',sans-serif;color:#111;white-space:pre;transform-origin:0 50%;transform:scaleX(0.9995);text-shadow:0 0 .4px #111">Mediodía</span>
<span style="position:absolute;left:901px;top:59.0px;font:9px/13px 'Liberation Sans',sans-serif;color:#111;white-space:pre;transform-origin:0 50%;transform:scaleX(1.0125);text-shadow:0 0 .4px #111">05:33 PM</span>
<div style="position:absolute;left:484px;top:89px;width:228px;height:22px;background:#fff;border:1px solid #9a9a9a;box-sizing:border-box"></div>
<div style="position:absolute;left:695px;top:90px;width:16px;height:20px;background:#e1e1e1;border:1px solid #adadad;box-sizing:border-box"></div>
<svg style="position:absolute;left:698px;top:96px" width="10" height="7" viewBox="0 0 10 7"><path d="M1 1l4 4 4-4" fill="none" stroke="#444" stroke-width="1.200"/></svg>
<span style="position:absolute;left:487px;top:93.0px;font:bold 12px/16px 'DejaVu Sans','Liberation Sans',sans-serif;color:#000;white-space:pre;transform-origin:0 50%;transform:scaleX(0.9191);">Tipo: &lt;undefined&gt;</span>
<div style="position:absolute;left:763px;top:91px;width:110px;height:20px;background:#fff;"></div>
<div style="position:absolute;left:873px;top:91px;width:14px;height:20px;background:#e1e1e1;border:1px solid #adadad;box-sizing:border-box"></div>
<svg style="position:absolute;left:875px;top:97px" width="10" height="7" viewBox="0 0 10 7"><path d="M1 1l4 4 4-4" fill="none" stroke="#444" stroke-width="1.200"/></svg>
<svg style="position:absolute;left:768px;top:97px" width="10" height="8" viewBox="0 0 10 8"><path d="M1 4l3 3 5-6" fill="none" stroke="#222" stroke-width="1.200"/></svg>
<span style="position:absolute;left:787px;top:94.25px;font:11.5px/15.5px 'DejaVu Sans','Liberation Sans',sans-serif;color:#000;white-space:pre;transform-origin:0 50%;transform:scaleX(0.8928);">Sin etiqueta</span>
<div style="position:absolute;left:1108px;top:194px;width:295px;height:38px;background:#f1f1f1;border-right:1px solid #9a9a9a;border-bottom:1px solid #b8b8b8;border-top:1px solid #f6f6f6;box-sizing:border-box"></div>
<div style="position:absolute;left:1110px;top:198px;width:2px;height:33px;background:repeating-linear-gradient(#cbcbcb 0 2px,transparent 2px 4px)"></div>
<div style="position:absolute;left:1245px;top:204px;width:151px;height:20px;background:#f4f4f4;"></div>
<span style="position:absolute;left:1121px;top:207.25px;font:11.5px/15.5px 'DejaVu Sans','Liberation Sans',sans-serif;color:#000;white-space:pre;transform-origin:0 50%;transform:scaleX(0.9199);">Medidas</span>
<svg style="position:absolute;left:72px;top:233px;overflow:hidden" width="1846" height="778" viewBox="72 233 1846 778">
<defs>
<linearGradient id="sky" x1="0" y1="0" x2="0" y2="1"><stop offset="0" stop-color="#139cdb"/><stop offset="1" stop-color="#bbe3f7"/></linearGradient>
<pattern id="slatB" width="6.1" height="20" patternUnits="userSpaceOnUse" patternTransform="skewX(-6)"><rect width="6.1" height="20" fill="#1a1816"/><rect x="1" width="2.9" height="20" fill="#3d9fd6"/><rect x="4.6" width="0.8" height="20" fill="#4a3424"/></pattern>
<pattern id="slatW" width="6.1" height="20" patternUnits="userSpaceOnUse"><rect width="6.1" height="20" fill="#1a1816"/><rect x="1.4" width="2" height="20" fill="#e8eef2"/></pattern>
<pattern id="slatT" width="6.1" height="20" patternUnits="userSpaceOnUse"><rect width="6.1" height="20" fill="#1a1816"/><rect x="1" width="2.9" height="20" fill="#a39a92"/></pattern>
<pattern id="wood" width="20" height="3.4" patternUnits="userSpaceOnUse"><rect width="20" height="3.4" fill="#100d0c"/><rect x="3" y="1" width="11" height="1" fill="#4a2e20"/></pattern>
<pattern id="woodv" width="3.6" height="10" patternUnits="userSpaceOnUse" patternTransform="skewX(-35)"><rect width="3.6" height="10" fill="#0e0c0b"/><rect x="1" width="1.5" height="10" fill="#5a3a28"/></pattern>
<linearGradient id="fadeg" x1="0" x2="1"><stop offset="0" stop-color="#fff"/><stop offset="0.7" stop-color="#fff"/><stop offset="1" stop-color="#000"/></linearGradient><mask id="fadeR" maskUnits="userSpaceOnUse" x="900" y="620" width="280" height="16"><rect x="900" y="620" width="280" height="16" fill="url(#fadeg)"/></mask>
<linearGradient id="cang" x1="0" x2="1"><stop offset="0" stop-color="#9aa6ac"/><stop offset="0.15" stop-color="#6a747b"/><stop offset="0.5" stop-color="#7c8084"/><stop offset="0.85" stop-color="#6a7076"/><stop offset="1" stop-color="#8a9298"/></linearGradient>
<linearGradient id="colg" x1="0" x2="0" y1="0" y2="1"><stop offset="0" stop-color="#6c6c6c"/><stop offset="1" stop-color="#9c9c9c"/></linearGradient>
<filter id="marble" x="0" y="0" width="100%" height="100%"><feTurbulence type="turbulence" baseFrequency="0.022 0.016" numOctaves="3" seed="11"/><feColorMatrix type="matrix" values="0 0 0 0 1  0 0 0 0 1  0 0 0 0 1  -7 0 0 0 1.05"/><feComposite in2="SourceGraphic" operator="in"/></filter>
<filter id="marbleL" x="0" y="0" width="100%" height="100%"><feTurbulence type="fractalNoise" baseFrequency="0.03 0.03" numOctaves="2" seed="3"/><feColorMatrix type="matrix" values="0 0 0 0 1  0 0 0 0 1  0 0 0 0 1  1.4 0 0 0 -0.5"/><feComposite in2="SourceGraphic" operator="in"/></filter>
</defs>
<rect x="72" y="233" width="1846" height="495" fill="url(#sky)"  />
<rect x="72" y="728" width="1846" height="283" fill="#c0c0c6"  />
<line x1="349" y1="235" x2="314" y2="1011" stroke="#2424c4" stroke-width="1.2" />
<rect x="1911" y="366" width="7" height="645" fill="#5c5c5e"  />
<polygon points="1200,826 1322,826 1602,921 1918,1020 1918,1011 1200,1011" fill="#3d3c3e" stroke="#000" stroke-width="1" />
<polygon points="588,924.5 632,905 640,905 640,925" fill="#3d3c3e"  />
<polygon points="588,924.5 1918,929 1918,951 539,946.5" fill="#4b4c4d"  />
<polygon points="610,926 700,926.5 678,947 588,946.5" fill="#565958"  opacity="0.7"/>
<polygon points="830,926 915,926.5 893,947 808,946.5" fill="#565958"  opacity="0.7"/>
<polygon points="1050,926 1140,926.5 1118,947 1028,946.5" fill="#565958"  opacity="0.7"/>
<polygon points="1300,926 1410,926.5 1388,947 1278,946.5" fill="#565958"  opacity="0.7"/>
<polygon points="1530,926 1610,926.5 1588,947 1508,946.5" fill="#565958"  opacity="0.7"/>
<line x1="588" y1="924.5" x2="1918" y2="929" stroke="#1a1a1a" stroke-width="1" />
<polygon points="539,946.5 1918,951 1918,1011 390,1011" fill="#232224"  />
<line x1="539" y1="946.5" x2="1918" y2="951" stroke="#111" stroke-width="1" />
<line x1="612" y1="947" x2="489" y2="1011" stroke="#0c0c0c" stroke-width="1" />
<line x1="390" y1="1011" x2="632" y2="905" stroke="#111" stroke-width="1.2" />
<line x1="524" y1="952" x2="632" y2="905" stroke="#1fa51f" stroke-width="2.2" />
<polygon points="872.4,263.5 873,263.5 881.5,286 872.4,288" fill="#4a4a4c" stroke="#000" stroke-width="1" />
<polygon points="802,263.5 872.4,263.5 872.4,608 798.5,608" fill="#424244" stroke="#000" stroke-width="1.5" />
<polygon points="802,263.5 872.4,263.5 872.4,608 798.5,608" fill="#8c8c8c"  filter="url(#marble)" opacity="0.5"/>
<polygon points="866,360 926,360 926,608 864.5,608" fill="#7a7a7b" stroke="#000" stroke-width="1" />
<rect x="887" y="430" width="38.5" height="12" fill="#6c6c6e"  />
<rect x="887" y="444" width="38.5" height="34" fill="#6c6c6e"  />
<rect x="887" y="480" width="38.5" height="34.5" fill="#6c6c6e"  />
<rect x="887" y="516.5" width="38.5" height="33.5" fill="#6c6c6e"  />
<rect x="887" y="552" width="38.5" height="35" fill="#6c6c6e"  />
<rect x="887" y="589" width="38.5" height="18" fill="#6c6c6e"  />
<polygon points="872,340 880,352 1114,352 1114,404 926,404 926,424 872,424" fill="#707072"  />
<polygon points="1114,352 1121,352 1121,404 1106,404" fill="#7c7c7e"  />
<line x1="1114" y1="353" x2="1106" y2="404" stroke="#333" stroke-width="0.8" />
<polygon points="856,294 1122,290 1114,353 884,353" fill="#111112" stroke="#000" stroke-width="1" />
<rect x="863" y="294.5" width="63" height="17.0" fill="url(#wood)"  />
<rect x="927" y="294.5" width="58" height="13.5" fill="url(#slatB)"  />
<rect x="927" y="308.0" width="58" height="6.5" fill="url(#slatT)"  />
<rect x="987" y="294.5" width="69" height="17.0" fill="url(#wood)"  />
<rect x="1058" y="294.5" width="64" height="13.5" fill="url(#slatB)"  />
<rect x="1058" y="308.0" width="64" height="6.5" fill="url(#slatT)"  />
<rect x="872" y="315.7" width="58" height="12.8" fill="url(#slatT)"  opacity="0.55"/>
<rect x="905" y="315.7" width="25" height="9.8" fill="url(#slatB)"  opacity="0.8"/>
<rect x="992" y="315.7" width="61" height="11.8" fill="url(#slatB)"  />
<rect x="992" y="327.5" width="61" height="6.0" fill="url(#slatT)"  />
<rect x="940.3" y="334.6" width="49.3" height="7.0" fill="url(#slatB)"  />
<rect x="940.3" y="341.6" width="49.3" height="3.0" fill="url(#slatW)"  />
<rect x="940.3" y="345.6" width="49.3" height="6.4" fill="url(#slatT)"  />
<rect x="1056" y="334.6" width="57" height="7.0" fill="url(#slatB)"  />
<rect x="1056" y="341.6" width="57" height="3.0" fill="url(#slatW)"  />
<rect x="1056" y="345.6" width="57" height="6.4" fill="url(#slatT)"  />
<polygon points="854,288 862,295 884.5,353.5 878,356 874.3,347" fill="#47474a" stroke="#000" stroke-width="0.8" />
<polygon points="854,288 1134,283.5 1135,292 1122,302 1121,291 856,294.5" fill="#7c7c7a" stroke="#000" stroke-width="1.2" />
<line x1="1057.2" y1="285" x2="1057.2" y2="291" stroke="#222" stroke-width="0.8" />
<polygon points="1122,291 1135,291 1130,303 1121,303" fill="#3a3a3c" stroke="#000" stroke-width="0.8" />
<rect x="1114" y="300" width="7" height="104" fill="#3c3c3e" stroke="#000" stroke-width="0.8" />
<rect x="1121" y="303" width="8.5" height="101" fill="#f2f2f2" stroke="#000" stroke-width="0.8" />
<rect x="933" y="306" width="6.5" height="98" fill="#48484a" stroke="#000" stroke-width="0.8" />
<rect x="880" y="360" width="4.5" height="68" fill="#2a2a2c"  />
<rect x="867" y="355.5" width="13.5" height="5.5" fill="#f2f2f2" stroke="#000" stroke-width="0.8" />
<rect x="879" y="423" width="47" height="6.5" fill="#f2f2f2" stroke="#000" stroke-width="1" />
<polygon points="926,411 1145.3,411 1147.4,608 926,608" fill="#e9e9e7" stroke="#000" stroke-width="1" />
<polygon points="926,411 1145.3,411 1147.4,608 926,608" fill="#fff"  filter="url(#marbleL)" opacity="0.8"/>
<line x1="965" y1="411" x2="965" y2="608" stroke="#000" stroke-width="1.5" />
<line x1="1006" y1="411" x2="1006" y2="608" stroke="#000" stroke-width="1.5" />
<line x1="1046.3" y1="411" x2="1046.3" y2="608" stroke="#000" stroke-width="1.5" />
<line x1="1086.3" y1="411" x2="1086.3" y2="608" stroke="#000" stroke-width="1.5" />
<line x1="1127" y1="411" x2="1128.2" y2="608" stroke="#000" stroke-width="1.5" />
<line x1="926" y1="439.5" x2="1146.5" y2="439.5" stroke="#000" stroke-width="1.5" />
<line x1="926" y1="480" x2="1146.5" y2="480" stroke="#000" stroke-width="1.5" />
<line x1="926" y1="519.5" x2="1146.5" y2="519.5" stroke="#000" stroke-width="1.5" />
<line x1="926" y1="559" x2="1146.5" y2="559" stroke="#000" stroke-width="1.5" />
<line x1="926" y1="600" x2="1146.5" y2="600" stroke="#000" stroke-width="1.5" />
<rect x="923.5" y="404" width="222.5" height="7.5" fill="#f4f4f4" stroke="#000" stroke-width="1.2" />
<rect x="1006.5" y="519.2" width="66.5" height="79.3" fill="#262626" stroke="#000" stroke-width="1.2" />
<rect x="1012.9" y="522.9" width="25.6" height="6.9" fill="#8c8c8c" stroke="#000" stroke-width="0.8" />
<rect x="1041.6" y="522.9" width="25.1" height="6.9" fill="#8c8c8c" stroke="#000" stroke-width="0.8" />
<rect x="1012.9" y="532" width="25.6" height="6.9" fill="#8c8c8c" stroke="#000" stroke-width="0.8" />
<rect x="1041.6" y="532" width="25.1" height="6.9" fill="#8c8c8c" stroke="#000" stroke-width="0.8" />
<rect x="1012.9" y="541" width="25.6" height="6.4" fill="#8c8c8c" stroke="#000" stroke-width="0.8" />
<rect x="1041.6" y="541" width="25.1" height="6.4" fill="#8c8c8c" stroke="#000" stroke-width="0.8" />
<rect x="1012.9" y="549.5" width="25.6" height="6.9" fill="#8c8c8c" stroke="#000" stroke-width="0.8" />
<rect x="1041.6" y="549.5" width="25.1" height="6.9" fill="#8c8c8c" stroke="#000" stroke-width="0.8" />
<rect x="1012.9" y="561.8" width="25.6" height="5.8" fill="#bdbdbd" stroke="#000" stroke-width="0.8" />
<rect x="1041.6" y="561.8" width="25.1" height="5.8" fill="#bdbdbd" stroke="#000" stroke-width="0.8" />
<rect x="1012.9" y="569.8" width="25.6" height="6.9" fill="#bdbdbd" stroke="#000" stroke-width="0.8" />
<rect x="1041.6" y="569.8" width="25.1" height="6.9" fill="#bdbdbd" stroke="#000" stroke-width="0.8" />
<rect x="1012.9" y="578.8" width="25.6" height="6.4" fill="#bdbdbd" stroke="#000" stroke-width="0.8" />
<rect x="1041.6" y="578.8" width="25.1" height="6.4" fill="#bdbdbd" stroke="#000" stroke-width="0.8" />
<rect x="1012.9" y="587.3" width="25.6" height="7.5" fill="#bdbdbd" stroke="#000" stroke-width="0.8" />
<rect x="1041.6" y="587.3" width="25.1" height="7.5" fill="#bdbdbd" stroke="#000" stroke-width="0.8" />
<rect x="828.5" y="362.5" width="26.5" height="59.0" fill="#0c0c0c"  />
<rect x="832" y="366.5" width="19.5" height="51.5" fill="#50626a"  />
<line x1="832" y1="366.5" x2="851.5" y2="410" stroke="#222" stroke-width="0.7" />
<rect x="827" y="529.5" width="26.5" height="58.0" fill="#0c0c0c"  />
<rect x="830.5" y="533.5" width="19.5" height="50.5" fill="#50626a"  />
<polygon points="596.5,609 1223.5,608.5 1223.5,616 596.5,616.5" fill="url(#cang)" stroke="#000" stroke-width="1.2" />
<polygon points="596.5,616.5 1223.5,616 1226.3,620.5 1205,634 641,637 596.3,624.3" fill="#0c0c0d" stroke="#000" stroke-width="1" />
<polygon points="598,617 1223,616.5 1223,620 598,620.7" fill="#2c2c2e"  />
<rect x="905" y="624" width="270" height="8.5" fill="url(#woodv)"  opacity="0.75" mask="url(#fadeR)"/>
<rect x="642" y="635" width="563" height="22" fill="#2b2b2d" stroke="#000" stroke-width="1" />
<rect x="656" y="657" width="538" height="267" fill="#2a2a2c" stroke="#000" stroke-width="1" />
<polygon points="638,658 661.5,658 661.5,688 637,688" fill="#2d2d2f" stroke="#000" stroke-width="1" />
<polygon points="637,688 661.5,688 657,923.5 632,923.5" fill="#959596" stroke="#000" stroke-width="1" />
<polygon points="637,688 661.5,688 657,923.5 632,923.5" fill="#c4c4c4"  filter="url(#marble)" opacity="0.3"/>
<line x1="661.5" y1="688" x2="657" y2="923.5" stroke="#fff" stroke-width="1" stroke-dasharray="5 3"/>
<polygon points="1190,657 1205,657 1209,926 1194,926" fill="url(#colg)" stroke="#000" stroke-width="1" />
<rect x="1172.8" y="657" width="15.2" height="267" fill="#2b2b2d" stroke="#000" stroke-width="0.9" />
<rect x="1188" y="657" width="2.5" height="267" fill="#0c0c0c"  />
<rect x="661.5" y="657" width="10.5" height="267" fill="#2c2c2e" stroke="#000" stroke-width="0.8" />
<rect x="672" y="657" width="500.8" height="267" fill="#29292b" stroke="#000" stroke-width="1" />
<path d="M676,921 V663 H916" fill="none" stroke="#000" stroke-width="1"/>
<path d="M681,917 V669 H914 V673 H686 V906 H913 V913 H681" fill="none" stroke="#000" stroke-width="1"/>
<rect x="916" y="657" width="6" height="267" fill="#262628" stroke="#000" stroke-width="0.9" />
<rect x="922" y="657" width="9.5" height="267" fill="#2b2b2d" stroke="#000" stroke-width="0.9" />
<path d="M931.5,665 H1167.2 V921" fill="none" stroke="#000" stroke-width="1"/>
<path d="M931.5,670.4 H1162.6 V721 M931.5,675 H1162.6" fill="none" stroke="#000" stroke-width="1"/>
<path d="M931.5,906 H1062 M931.5,913 H1062" fill="none" stroke="#000" stroke-width="1"/>
<rect x="1062.5" y="722" width="101.5" height="195" fill="#29292b" stroke="#000" stroke-width="1" />
<path d="M1068,917 V726.5 H1164" fill="none" stroke="#000" stroke-width="1"/>
<line x1="672" y1="921" x2="1172.8" y2="921" stroke="#000" stroke-width="1" />
<rect x="742" y="683.5" width="171.5" height="15.0" fill="#2e9bc5" stroke="#000" stroke-width="1.3" />
<rect x="746.6" y="684.3" width="21.3" height="13.4" fill="#5ccdf5"  />
<rect x="773" y="684.3" width="15.2" height="13.4" fill="#49c4f0"  />
<rect x="807.7" y="684.3" width="21.3" height="13.4" fill="#2a8eb6"  />
<polygon points="746.6,693 767.9,697.7 746.6,697.7" fill="#3aa6cc"  />
<rect x="933.5" y="683.5" width="101.0" height="14.5" fill="#2a93b4" stroke="#000" stroke-width="1.3" />
<rect x="741" y="744.5" width="172" height="15.0" fill="#1fb2de" stroke="#000" stroke-width="1.3" />
<rect x="933.5" y="744.5" width="67.0" height="15.0" fill="#2485a6" stroke="#000" stroke-width="1.3" />
<rect x="1080.5" y="744.5" width="71.0" height="15.0" fill="#3a9cb6" stroke="#000" stroke-width="1.3" />
<rect x="1125" y="745.5" width="7" height="13.3" fill="#a8e4f4"  />
<rect x="740" y="802.5" width="173" height="14.5" fill="#1fb2de" stroke="#000" stroke-width="1.3" />
<rect x="933.5" y="802.5" width="41.0" height="14.5" fill="#3a9cb8" stroke="#000" stroke-width="1.3" />
<rect x="1080.5" y="802.5" width="71.5" height="14.5" fill="#237f96" stroke="#000" stroke-width="1.3" />
<rect x="739" y="860.5" width="174" height="14.5" fill="#1fb2de" stroke="#000" stroke-width="1.3" />
<rect x="933.5" y="860.5" width="19.5" height="14.5" fill="#1fb2de" stroke="#000" stroke-width="1.3" />
<rect x="1081" y="860.5" width="71" height="14.5" fill="#2a93b0" stroke="#000" stroke-width="1.3" />
<rect x="72" y="233" width="1846" height="1" fill="#a2a9aa"  />
<rect x="72" y="234" width="1846" height="1" fill="#3e7296"  />
<rect x="72" y="233" width="2" height="778" fill="#8a8a8a"  />
</svg>
<div style="position:absolute;left:3px;top:273px;width:66px;height:2px;background:repeating-linear-gradient(90deg,#cbcbcb 0 2px,transparent 2px 4px)"></div>
<svg style="position:absolute;left:7.0px;top:283.0px" width="24" height="24" viewBox="0 0 24 24"><path d="M7 2.500v17l4-3.800 3 6.800 2.800-1.300-3-6.500H19.500z" fill="#000" transform="translate(12 12) scale(.8) translate(-12.500 -12)"/></svg>
<svg style="position:absolute;left:41.0px;top:283.0px" width="24" height="24" viewBox="0 0 24 24"><g fill="none" stroke="#2d9ae0" stroke-width="1.400" stroke-linejoin="round"><path d="M-.5 3L13.500-1.500 25 6v15L9.500 26-.5 19.500z"/><path d="M-.5 3l10.400 5.600L25 6M9.900 8.600V26M13.500-1.500V14L-.5 19.500M13.500 14L25 21"/></g><g transform="translate(8.5 2.5) scale(1.0)"><path d="M0 3L5 0l5 2.500v6L5 11.500 0 9z" fill="#c8a088" stroke="#222" stroke-width="1.200" stroke-linejoin="round"/><path d="M0 3L5 0l5 2.500L5 5.500z" fill="#dce8d4"/><path d="M5 5.500l5-3v6L5 11.500z" fill="#9aa696"/><path d="M0 3l5 2.500v6M5 5.500l5-3" fill="none" stroke="#222" stroke-width="0.700"/></g><g transform="translate(2.5 10.5) scale(1.0)"><path d="M0 3L5 0l5 2.500v6L5 11.500 0 9z" fill="#c8a088" stroke="#222" stroke-width="1.200" stroke-linejoin="round"/><path d="M0 3L5 0l5 2.500L5 5.500z" fill="#dce8d4"/><path d="M5 5.500l5-3v6L5 11.500z" fill="#9aa696"/><path d="M0 3l5 2.500v6M5 5.500l5-3" fill="none" stroke="#222" stroke-width="0.700"/></g><g transform="translate(12 11.5) scale(1.0)"><path d="M0 3L5 0l5 2.500v6L5 11.500 0 9z" fill="#c8a088" stroke="#222" stroke-width="1.200" stroke-linejoin="round"/><path d="M0 3L5 0l5 2.500L5 5.500z" fill="#dce8d4"/><path d="M5 5.500l5-3v6L5 11.500z" fill="#9aa696"/><path d="M0 3l5 2.500v6M5 5.500l5-3" fill="none" stroke="#222" stroke-width="0.700"/></g></svg>
<svg style="position:absolute;left:7.0px;top:317.0px" width="24" height="24" viewBox="0 0 24 24"><path d="M3.500 8L8 2.500 13 .8l3.700 1.500L23 11.800l-.1 5.900-6.200 4-7.900-4.500z" fill="#3a3a34" stroke="#111" stroke-width="1"/><path d="M5 8l4-4.500L13 2l3 1.500-3 5.500-4 2z" fill="#8c9c9c"/><path d="M11 15.500l5-3 3.500 5-4.500 3z" fill="#ecdcae" stroke="#222" stroke-width="0.700"/><path d="M16 12.500l5.500-2.500.5 7-2.500.5z" fill="#8e8c7c" stroke="#222" stroke-width="0.600"/><path d="M17 3.500c4-1 6 2 4 5.500" fill="none" stroke="#222" stroke-width="1.200"/><path d="M1 17C1 11 5 7.500 12 7l2 1.500c-5 1.500-6.500 4.500-6 9 .3 3-1.500 4.500-4 4-2-.5-3-2-3-4.500z" fill="#f6b80c" stroke="#3a2a00" stroke-width="0.900"/></svg>
<svg style="position:absolute;left:41.0px;top:317.0px" width="24" height="24" viewBox="0 0 24 24"><path d="M2.500 10.800L14.800 14.500 11.600 23.800.6 17.700z" fill="#f86c96" stroke="#3a1a26" stroke-width="0.900" stroke-linejoin="round"/><path d="M2.500 10.800L14.800 14.500 23 3.100 13.700.6z" fill="#f9aac2" stroke="#3a1a26" stroke-width="0.900" stroke-linejoin="round"/><path d="M14.800 14.500L23 3.100 22.200 7 11.600 23.800z" fill="#c8607f" stroke="#3a1a26" stroke-width="0.900" stroke-linejoin="round"/><path d="M11.500 9.500l5-4.500" stroke="#d06088" stroke-width="1.500"/><path d="M3 11.500l11.500 3.500" stroke="#fcd0dc" stroke-width="0.800"/></svg>
<svg style="position:absolute;left:7.0px;top:359.0px" width="24" height="24" viewBox="0 0 24 24"><path d="M2.500 22l2.200-6.500L18.500 2c.8-.6 2 .2 2.800 1s1.200 1.800.6 2.500L8.500 19.500z" fill="#c8202c" stroke="#5a0a10" stroke-width="0.700"/><path d="M2.500 22l2.200-6.500 3.800 4z" fill="#e0c8a8" stroke="#5a0a10" stroke-width="0.500"/><path d="M2.500 22l1-3 1.700 1.900z" fill="#222"/><path d="M6 16.500L19.500 3" stroke="#e86068" stroke-width="1"/><path d="M17.500 3l3.500 3.500" stroke="#666" stroke-width="1.400"/></svg>
<svg style="position:absolute;left:41.0px;top:359.0px" width="24" height="24" viewBox="0 0 24 24"><path d="M3 21C1 14 4 8.500 7 8.500c4 0 1.500 10.500 5.500 10.500S14 6 17.500 6c2 0 3-1.500 3.500-3.500" fill="none" stroke="#7a0a12" stroke-width="2.300" stroke-linecap="round"/><path d="M3 21C1 14 4 8.500 7 8.500c4 0 1.500 10.500 5.500 10.500S14 6 17.500 6c2 0 3-1.500 3.500-3.500" fill="none" stroke="#d4141e" stroke-width="1.300" stroke-linecap="round"/><circle cx="3" cy="21" r="1.600" fill="#d4141e" stroke="#7a0a12" stroke-width="0.500"/><circle cx="21" cy="2.500" r="1.600" fill="#d4141e" stroke="#7a0a12" stroke-width="0.500"/></svg>
<svg style="position:absolute;left:7.0px;top:393.0px" width="24" height="24" viewBox="0 0 24 24"><rect x="4" y="3" width="15.500" height="18" fill="#8e8c7c" stroke="#4a483c"/><path d="M4 21L19.500 3" stroke="#e8404c" stroke-width="2.400" fill="none"/><path d="M4 21L19.500 3" stroke="#fbe4e6" stroke-width="0.900" fill="none"/><circle cx="4" cy="21" r="1.4" fill="#d8121a"/><circle cx="19.5" cy="3" r="1.4" fill="#d8121a"/></svg>
<svg style="position:absolute;left:41.0px;top:393.0px" width="24" height="24" viewBox="0 0 24 24"><rect x="4.500" y="3" width="15" height="18" fill="#8e8c7c" stroke="#4a483c"/><path d="M4.500 3v18h15" stroke="#e8404c" stroke-width="1.200" fill="none"/><path d="M4.500 8.500c8 0 14 5 14.500 12.500" stroke="#e8404c" stroke-width="2.400" fill="none"/><path d="M4.500 8.500c8 0 14 5 14.500 12.500" stroke="#fbe4e6" stroke-width="0.900" fill="none"/><circle cx="4.5" cy="3" r="1.4" fill="#d8121a"/><circle cx="4.5" cy="21" r="1.4" fill="#d8121a"/><circle cx="19.5" cy="21" r="1.4" fill="#d8121a"/><circle cx="4.5" cy="8.5" r="1.4" fill="#d8121a"/></svg>
<svg style="position:absolute;left:7.0px;top:427.0px" width="24" height="24" viewBox="0 0 24 24"><circle cx="12" cy="12.500" r="10" fill="#8e8c7c" stroke="#3a382e" stroke-width="1.100"/><path d="M12 12.500l7.500-7" stroke="#e8404c" stroke-width="2.400" fill="none"/><path d="M12 12.500l7.500-7" stroke="#fbe4e6" stroke-width="0.900" fill="none"/><circle cx="12" cy="12.5" r="1.4" fill="#d8121a"/><circle cx="19.5" cy="5.5" r="1.4" fill="#d8121a"/></svg>
<svg style="position:absolute;left:41.0px;top:427.0px" width="24" height="24" viewBox="0 0 24 24"><circle cx="12" cy="12.500" r="10.300" fill="none" stroke="#e8404c" stroke-width="1"/><path d="M10 2.500l9 2.500 3 8-5 8-9 1-6-6.500 1-9z" fill="#8e8c7c" stroke="#3a382e"/><path d="M12 12.500l8-6.500" stroke="#e8404c" stroke-width="2.400" fill="none"/><path d="M12 12.500l8-6.500" stroke="#fbe4e6" stroke-width="0.900" fill="none"/><circle cx="12" cy="12.5" r="1.4" fill="#d8121a"/><circle cx="20" cy="6" r="1.4" fill="#d8121a"/></svg>
<svg style="position:absolute;left:7.0px;top:461.0px" width="24" height="24" viewBox="0 0 24 24"><path d="M3.500 21.500C14 20.500 21 13 21.500 3" fill="none" stroke="#222" stroke-width="1.400"/><path d="M3.500 3h18L3.500 21.500" fill="none" stroke="#e8303a" stroke-width="1.300"/><circle cx="3.5" cy="3" r="1.4" fill="#d8121a"/><circle cx="21.5" cy="3" r="1.4" fill="#d8121a"/><circle cx="3.5" cy="21.5" r="1.4" fill="#d8121a"/></svg>
<svg style="position:absolute;left:41.0px;top:461.0px" width="24" height="24" viewBox="0 0 24 24"><path d="M5.500 22C-1 13 7 0 21 6" fill="none" stroke="#222" stroke-width="1.400"/><path d="M5.500 22L21 6M6 5.500l8.500 9.500" fill="none" stroke="#e8303a" stroke-width="1.300"/><circle cx="5.5" cy="22" r="1.4" fill="#d8121a"/><circle cx="21" cy="6" r="1.4" fill="#d8121a"/><circle cx="6" cy="5.5" r="1.4" fill="#d8121a"/></svg>
<svg style="position:absolute;left:7.0px;top:495.0px" width="24" height="24" viewBox="0 0 24 24"><path d="M9 3.500c9-2 15 7 11 14.500-3 5-11 5-15 0" fill="none" stroke="#222" stroke-width="1.400"/><path d="M9 3.500l8 17.500L4 15.500" fill="none" stroke="#e8303a" stroke-width="1.300"/><circle cx="9" cy="3.5" r="1.4" fill="#d8121a"/><circle cx="17" cy="21" r="1.4" fill="#d8121a"/><circle cx="4" cy="15.5" r="1.4" fill="#d8121a"/></svg>
<svg style="position:absolute;left:41.0px;top:495.0px" width="24" height="24" viewBox="0 0 24 24"><path d="M4 4h17C20.500 13.500 14 20.500 4 21.500z" fill="#8e8c7c" stroke="#3a382e"/><path d="M4 4h17" stroke="#e8303a" stroke-width="1.200"/><path d="M4 21.500L21 4" stroke="#e8404c" stroke-width="2.400" fill="none"/><path d="M4 21.500L21 4" stroke="#fbe4e6" stroke-width="0.900" fill="none"/><circle cx="4" cy="4" r="1.4" fill="#d8121a"/><circle cx="21" cy="4" r="1.4" fill="#d8121a"/><circle cx="4" cy="21.5" r="1.4" fill="#d8121a"/></svg>
<svg style="position:absolute;left:7.0px;top:537.0px" width="24" height="24" viewBox="0 0 24 24"><rect x="9.800" y="9.800" width="4.400" height="4.400" fill="#d4141e"/><path d="M12 .6L16.300 6.600H14.100V10.300H9.900V6.600H7.700z" fill="#d4141e" stroke="#f6f6f6" stroke-width="2" paint-order="stroke" stroke-linejoin="round" transform="rotate(0 12 12)"/><path d="M12 .6L16.300 6.600H14.100V10.300H9.900V6.600H7.700z" fill="#d4141e" stroke="#f6f6f6" stroke-width="2" paint-order="stroke" stroke-linejoin="round" transform="rotate(90 12 12)"/><path d="M12 .6L16.300 6.600H14.100V10.300H9.900V6.600H7.700z" fill="#d4141e" stroke="#f6f6f6" stroke-width="2" paint-order="stroke" stroke-linejoin="round" transform="rotate(180 12 12)"/><path d="M12 .6L16.300 6.600H14.100V10.300H9.900V6.600H7.700z" fill="#d4141e" stroke="#f6f6f6" stroke-width="2" paint-order="stroke" stroke-linejoin="round" transform="rotate(270 12 12)"/><path d="M12 .6L16.300 6.600H14.100V10.300H9.900V6.600H7.700z" fill="#d4141e" transform="rotate(0 12 12)"/><path d="M12 .6L16.300 6.600H14.100V10.300H9.900V6.600H7.700z" fill="#d4141e" transform="rotate(90 12 12)"/><path d="M12 .6L16.300 6.600H14.100V10.300H9.900V6.600H7.700z" fill="#d4141e" transform="rotate(180 12 12)"/><path d="M12 .6L16.300 6.600H14.100V10.300H9.900V6.600H7.700z" fill="#d4141e" transform="rotate(270 12 12)"/></svg>
<svg style="position:absolute;left:41.0px;top:537.0px" width="24" height="24" viewBox="0 0 24 24"><path d="M1 15l11-4.500L23 15v3l-11 4.500L1 18z" fill="#5c5a50" stroke="#222" stroke-width="0.900"/><path d="M1 15l11-4.500L23 15l-11 4.500z" fill="#8e8c7c" stroke="#222" stroke-width="0.900"/><path d="M12 2.500l4.300 5.500h-2.300v7h-4V8H7.700z" fill="#d4141e" stroke="#7a0a12" stroke-width="0.600"/></svg>
<svg style="position:absolute;left:7.0px;top:571.0px" width="24" height="24" viewBox="0 0 24 24"><g fill="#d4141e" stroke="#7a0a12" stroke-width="0.500"><path d="M1.500 11.500C1.500 5 8 1 14.500 3.500l1.200-2.800 5.300 7.800-8.800 1.200 1.200-2.700C9.500 5.500 6.500 8 6.500 11.500z"/><path d="M22.500 12.500c0 6.500-6.500 10.500-13 8l-1.200 2.800L3 15.500l8.800-1.200-1.200 2.700c3.900 1.500 6.900-1 6.900-4.500z"/></g></svg>
<svg style="position:absolute;left:41.0px;top:571.0px" width="24" height="24" viewBox="0 0 24 24"><path d="M2 10c1-6 10-9 17-4l3 3-4 2c-4-2-8-1.500-9 1.500-.8 2.500.5 5 4 5.500l-1 4.500C5 22 1 16 2 10z" fill="#5e5c52" stroke="#1a1a1a" stroke-width="1"/><path d="M4 9.500c2-4 9-6 14-2.500" fill="none" stroke="#d4141e" stroke-width="2.800"/><path d="M22 9.500l-1.500 9-3-2c-2 0-3.500.5-4.500 2l-3.500-3c2-3 4.500-4 7.500-3.500l-2-2.500z" fill="#d4141e" stroke="#7a0a12" stroke-width="0.500"/><path d="M8 13c2-2 4-2.500 6-2.500l-1.500 2.500c-1.500 0-3 .8-3.500 2z" fill="#d4141e"/></svg>
<svg style="position:absolute;left:7.0px;top:605.0px" width="24" height="24" viewBox="0 0 24 24"><rect x="2.500" y="2" width="19.500" height="19.500" fill="#fff" stroke="#e8303a" stroke-width="1"/><rect x="2.500" y="7" width="14.500" height="14.500" fill="#8e8c7c" stroke="#2a2a2a" stroke-width="1"/><path d="M23 1l-1.800 9-2.700-2.700-5 5-3-3 5-5L12.800 1.600z" fill="#d4141e" stroke="#7a0a12" stroke-width="0.500"/></svg>
<svg style="position:absolute;left:41.0px;top:605.0px" width="24" height="24" viewBox="0 0 24 24"><path d="M2.500 8C8 .5 19 2.500 21.500 12c.8 3.500.2 7-1 10" fill="none" stroke="#d4141e" stroke-width="1.700"/><path d="M5 14c2-4 7-4.500 9.500-1 1.500 2.500 1 5.500 0 8.500" fill="none" stroke="#222" stroke-width="1.300"/><path d="M21 3.500l-1.500 8.500-2.500-2.200-4.500 5.200-2.800-2.300 4.600-5.200-2.600-2.200z" fill="#d4141e" stroke="#7a0a12" stroke-width="0.500"/></svg>
<svg style="position:absolute;left:7.0px;top:646.0px" width="24" height="24" viewBox="0 0 24 24"><path d="M10.500 14l3 3L5 23l-3-2.500z" fill="#f0e020" stroke="#222" stroke-width="0.900"/><path d="M2 20.500L5 23l-1.200.8-2.600-2.300z" fill="#111"/><path d="M9.500 9C9.500 5 13 1.500 17 1.500l4 1c2 1.500 2.500 5.500 1 8.500l-3 5c-2 1.500-5 1.500-7 0z" fill="#3a3832" stroke="#111" stroke-width="0.900"/><ellipse cx="16.800" cy="8.500" rx="3.800" ry="5.300" transform="rotate(28 16.800 8.500)" fill="#f4e81c" stroke="#77756a" stroke-width="1.200"/></svg>
<svg style="position:absolute;left:41.0px;top:646.0px" width="24" height="24" viewBox="0 0 24 24"><path d="M4.500 15.500L14.500 4.500" stroke="#111" stroke-width="1.100"/><path d="M3 14l3 3M6 14l-3 3M13 3l3 3M16 3l-3 3" stroke="#111" stroke-width="1.100"/><path d="M4.500 15.500L12 22.500M14.500 4.500l7 8" stroke="#222" stroke-width="0.900"/><circle cx="12" cy="22.500" r="1.100" fill="#3aa83a"/><circle cx="21.500" cy="12.500" r="1.100" fill="#3aa83a"/><text x="6.500" y="8.500" font-size="7.500" font-family="Liberation Sans" fill="#111" transform="rotate(-45 6.500 8.500)" text-anchor="middle">5</text></svg>
<svg style="position:absolute;left:7.0px;top:680.0px" width="24" height="24" viewBox="0 0 24 24"><path d="M6 22L22.500 3.500C15 2.500 7 4 3.500 9 1 13 2 19 6 22z" fill="#e8d820" stroke="#2a2a10" stroke-width="1.200" stroke-linejoin="round"/><path d="M8.300 17.300L17.300 7.200C13 6.700 8.700 8 6.800 11c-1 2.300-.5 4.800 1.500 6.300z" fill="#f0f0f0" stroke="#2a2a10" stroke-width="0.900"/><path d="M4 10l1.500.8M3 13.500h1.700M3.500 17l1.500-.6M7 6l1 1.300M11 4.300l.4 1.600M15.500 3.700v1.600" stroke="#2a2a10" stroke-width="0.700"/></svg>
<svg style="position:absolute;left:41.0px;top:680.0px" width="24" height="24" viewBox="0 0 24 24"><rect x="9" y="2.500" width="14" height="12" fill="#fff" stroke="#222" stroke-width="1.100"/><text x="16" y="12" font-size="9" font-family="Liberation Serif" font-weight="bold" fill="#222" text-anchor="middle">A1</text><path d="M9 9H5.500v11" fill="none" stroke="#444" stroke-width="1.100"/><path d="M5.500 23.500L3.300 19h4.400z" fill="#111"/></svg>
<svg style="position:absolute;left:7.0px;top:714.0px" width="24" height="24" viewBox="0 0 24 24"><path d="M10 14.500L3 8.500M10 14.500l-7 5M10 14.500V23" stroke="#999" stroke-width="0.900" stroke-dasharray="1.200 1.200"/><path d="M10 14.500V5" stroke="#1a5ab8" stroke-width="2"/><path d="M10 1.500l-2.500 5h5z" fill="#1a5ab8"/><path d="M10 14.500l7-4" stroke="#2a9a3a" stroke-width="1.800"/><path d="M20.500 8.500l-5.300.8 2.500 3.700z" fill="#2a9a3a"/><path d="M10 14.500l7.500 5" stroke="#d4141e" stroke-width="1.800"/><path d="M20.500 21.500l-5.200-1 2.700-3.500z" fill="#d4141e"/><circle cx="10" cy="14.500" r="1.500" fill="#111"/></svg>
<svg style="position:absolute;left:41.0px;top:714.0px" width="24" height="24" viewBox="0 0 24 24"><path d="M3 19.500L10 3l5-1 6 17 2 2-4 2.500-4.500-1-1-3.500H9l-1 2.500L5 22z" fill="#55534a" stroke="#111" stroke-width="1" stroke-linejoin="round"/><path d="M10.500 13.500h3l-1.500-5z" fill="#f0f0f0" stroke="#111" stroke-width="0.800"/><path d="M15 2l6 17-1.500 1L13.500 3z" fill="#8e8c7c"/><path d="M3 19.500l2 2.500 3-.5M13.500 18.500l1 3.500 4.500 1" fill="none" stroke="#111" stroke-width="0.700"/></svg>
<div style="position:absolute;left:36.3px;top:752.7px;width:33.60000000000001px;height:32.39999999999998px;background:#cce4f7;border:1px solid #b6d6f0;box-sizing:border-box"></div>
<svg style="position:absolute;left:7.0px;top:757.0px" width="24" height="24" viewBox="0 0 24 24"><path d="M4.500 8.500C1 12 2 17 12 19.500" stroke="#c2182a" stroke-width="5.500" fill="none"/><path d="M9.500 15l6.500 5.500-7.500 3.500z" fill="#c2182a"/><path d="M4 8c2-1.500 4-2 6-2" stroke="#e86070" stroke-width="2" fill="none"/><path d="M13.500 7.500c5-1.500 9.500 2 8 6.500-.8 2.500-3 4-6 5" stroke="#2a9a55" stroke-width="5" fill="none"/><path d="M16 2.500L9.500 8l7 3z" fill="#2a9a55"/><path d="M15 7c3 0 5 1.500 5.500 3.500" stroke="#7ad8a0" stroke-width="1.600" fill="none"/><ellipse cx="11" cy="12.500" rx="3.500" ry="1.600" fill="#fff"/><path d="M12 .5v23.500" stroke="#111" stroke-width="2.200"/></svg>
<svg style="position:absolute;left:41.0px;top:757.0px" width="24" height="24" viewBox="0 0 24 24"><path d="M2.500 19.500L6.500 10.500C8 7 10 5 12 4c2-1.500 5-2 8-1.500l3.500 2c.5 1.500-1.500 3-3 4L18 10.500c-1 1.500-1 2.500.5 3l3.500 1.500c1.500 1 1 2.500-.5 2.500L15 18.500 8.500 23.500z" fill="#f6deb0" stroke="#3a3020" stroke-width="1"/><path d="M12.500 8L16 3.500M15 9l4-5M17.500 10l4-4.500" stroke="#6a5020" stroke-width="0.900"/><path d="M2.500 19.500l6 4" stroke="#f6deb0" stroke-width="1.600"/></svg>
<svg style="position:absolute;left:7.0px;top:791.0px" width="24" height="24" viewBox="0 0 24 24"><line x1="4" y1="20.5" x2="11" y2="13" stroke="#111" stroke-width="3" stroke-linecap="round"/><circle cx="14.5" cy="9" r="6" fill="#a9c6e8" stroke="#111" stroke-width="1.6"/></svg>
<svg style="position:absolute;left:41.0px;top:791.0px" width="24" height="24" viewBox="0 0 24 24"><rect x="3" y="3" width="18.500" height="18.500" fill="none" stroke="#d8121a" stroke-width="1.500"/><line x1="4" y1="20.5" x2="11" y2="13" stroke="#111" stroke-width="3" stroke-linecap="round"/><circle cx="14.5" cy="9" r="6" fill="#a9c6e8" stroke="#111" stroke-width="1.6"/></svg>
<svg style="position:absolute;left:7.0px;top:825.0px" width="24" height="24" viewBox="0 0 24 24"><path d="M1.2 1.2L8.6 1.9L6.5 3.9L9.0 6.4L6.4 9.0L3.9 6.5L1.9 8.6z" fill="#d4141e" stroke="#8a0a12" stroke-width="0.4"/><path d="M23.5 1.2L22.8 8.6L20.8 6.5L18.3 9.0L15.7 6.4L18.2 3.9L16.1 1.9z" fill="#d4141e" stroke="#8a0a12" stroke-width="0.4"/><path d="M23.5 22.5L16.1 21.8L18.2 19.8L15.7 17.3L18.3 14.7L20.8 17.2L22.8 15.1z" fill="#d4141e" stroke="#8a0a12" stroke-width="0.4"/><line x1="2.500" y1="22" x2="9" y2="15.500" stroke="#222" stroke-width="2.800" stroke-linecap="round"/><circle cx="12.700" cy="12" r="4.600" fill="#9fbfe6" stroke="#222" stroke-width="1.500"/></svg>
<svg style="position:absolute;left:41.0px;top:825.0px" width="24" height="24" viewBox="0 0 24 24"><circle cx="5.800" cy="8.500" r="4.700" fill="#9fbfe6" stroke="#222" stroke-width="1.500"/><path d="M3 7.600L11 1.500V5c5 0 9.500 2.500 9.500 7 0 3-2 6-6 8.500 2-3 2.500-5 1.500-7-1-1.800-2.500-2.500-5-2.500v3.300z" fill="#2a86dc" stroke="#0f4a8c" stroke-width="0.800"/><line x1="12.500" y1="13.500" x2="21.500" y2="21" stroke="#222" stroke-width="3.400" stroke-linecap="round"/></svg>
<svg style="position:absolute;left:7.0px;top:867.0px" width="24" height="24" viewBox="0 0 24 24"><circle cx="12" cy="3.200" r="1.500" fill="#fff" stroke="#111" stroke-width="0.900"/><path d="M10.500 5.500h3l1.800 7.500-1.300.8-.5 5h-1.200l-.3-2-.3 2h-1.200l-.5-5-1.300-.8z" fill="#fff" stroke="#111" stroke-width="0.900"/><path d="M7.500 18l9.500 5M16.500 18L7 23" stroke="#d83a40" stroke-width="1"/></svg>
<svg style="position:absolute;left:41.0px;top:867.0px" width="24" height="24" viewBox="0 0 24 24"><path d="M1.500 13c3-5.500 14-8 21-2-4 5-8 7-12 7s-7-2-9-5z" fill="#f8f8f8" stroke="#555" stroke-width="0.600"/><path d="M1.500 12.500c4-6 15-8 21-1.500" fill="none" stroke="#111" stroke-width="1.800"/><path d="M4 7.500c5-4 13-4 17.500 0" fill="none" stroke="#222" stroke-width="1.500"/><circle cx="10.500" cy="12.500" r="4" fill="#111"/><circle cx="9.500" cy="11" r="1" fill="#fff"/><path d="M4 16c3 3.500 10 4 16-1M7 19c3 1.500 7 1.500 10-.5" fill="none" stroke="#aaa" stroke-width="0.800"/></svg>
<svg style="position:absolute;left:7.0px;top:901.0px" width="24" height="24" viewBox="0 0 24 24"><g fill="#151515"><path d="M3 10c-.8-5 1.500-8 4-8s4 3.500 3.500 8c-.3 2.500-.8 4-1 5l-5.500.5c-.3-1.500-.8-3-1-5.500z"/><path d="M4 16.800l5.500-.5c.5 3-.5 5.200-2.500 5.500s-3-2-3-5z"/><path d="M13.500 7c.5-5 3.500-7 6-6.500s3.500 4 2 8.500c-.8 2.400-1.500 3.800-2 4.800l-5.300-1c.1-1.600-.9-3-.7-5.800z"/><path d="M14 14.200l5.200 1c-.3 3-1.800 4.800-3.800 4.600s-2.200-2.600-1.400-5.600z"/></g><path d="M4.500 13.500l4.500-.5M5 11.500l3.500-.3M15 11l4 1M15.500 9l3.500 1" stroke="#bbb" stroke-width="0.700"/></svg>
<svg style="position:absolute;left:41.0px;top:901.0px" width="24" height="24" viewBox="0 0 24 24"><circle cx="11" cy="12" r="6.500" fill="#fff" stroke="#222" stroke-width="1.200"/><path d="M1 12h20M11 2v20" stroke="#222" stroke-width="1.200"/><path d="M23.500 12l-4-3.500v7z" fill="#222"/><text x="7" y="11" font-size="4.500" font-family="Liberation Sans" fill="#222">C</text><text x="12" y="17" font-size="4.500" font-family="Liberation Sans" fill="#222">A B</text></svg>
<svg style="position:absolute;left:7.0px;top:943.0px" width="24" height="24" viewBox="0 0 24 24"><path d="M11.200 1.300L20.300 6.550V17.050L11.200 22.300 2.100 17.050V6.550z" fill="#f0f0f0" stroke="#14598f" stroke-width="2.300" stroke-linejoin="round"/><path d="M11.200 3.900L18 7.850v7.900L11.200 19.700 4.400 15.750V7.850z" fill="none" stroke="#fff" stroke-width="1"/><path d="M11.200 6L16.400 9v6L11.200 18 6 15V9z" fill="#fff" stroke="#14598f" stroke-width="1.900" stroke-linejoin="round"/><path d="M11.200 12v4.500M11.200 12l3.900-2.200M11.200 12L7.300 9.800" stroke="#14598f" stroke-width="1.600"/><path d="M18.200 8.500h3.200v9.700h2.700L19.800 24.900 15.500 18.200h2.700z" fill="#fff" stroke="#f0f0f0" stroke-width="3" stroke-linejoin="round"/><path d="M18.200 8.500h3.200v9.700h2.700L19.800 24.900 15.500 18.200h2.700z" fill="#fff" stroke="#14598f" stroke-width="1.300" stroke-linejoin="round"/></svg>
<svg style="position:absolute;left:41.0px;top:943.0px" width="24" height="24" viewBox="0 0 24 24"><g fill="none" stroke="#14598f" stroke-width="2.600" stroke-linejoin="round"><path d="M1.500 5.500c4 0 6.500 4 10.500 4s6.500-5 10-5.500"/><path d="M1.500 11.500c4 0 6.500 2.500 10.500 2.500s6.500-3.500 10-4"/><path d="M1.500 17c4 0 7-2.500 10.500-3"/><path d="M1.500 21.500c3 0 5.500-1.500 7.500-3.500"/></g><path d="M18.500 2l4.500 1.500-2 3.500z" fill="#14598f"/><path d="M20.500 8l2.500 1-1 3z" fill="#14598f"/><circle cx="18.300" cy="18.700" r="5.300" fill="#fff" stroke="#14598f" stroke-width="1.500"/><path d="M15.600 18a2.800 2.800 0 0 1 4.900-1.100M21 19.400a2.800 2.800 0 0 1-4.900 1.100" stroke="#14598f" stroke-width="1.200" fill="none"/><path d="M20.800 15.400v1.900h-1.900M15.800 22v-1.900h1.900" stroke="#14598f" stroke-width="1" fill="none"/></svg>
<svg style="position:absolute;left:7.0px;top:977.0px" width="24" height="24" viewBox="0 0 24 24"><g fill="#fff" stroke="#14598f" stroke-width="2" stroke-linejoin="round"><path d="M1.500 15.500l9.500-4 9.500 4-9.500 4z"/><path d="M1.500 11.500l9.500-4 9.500 4-9.500 4z"/><path d="M1.500 7.500l9.500-4 9.500 4-9.500 4z"/></g><path d="M6.500 7.500l4.500-1.900 4.500 1.900-4.500 1.900z" fill="#14598f"/><path d="M12.500 15.500h5.500v-3l5.800 5-5.800 5v-3h-5.500z" fill="#fff" stroke="#f0f0f0" stroke-width="2.600"/><path d="M12.500 15.500h5.500v-3l5.800 5-5.800 5v-3h-5.500z" fill="#fff" stroke="#14598f" stroke-width="1.400" stroke-linejoin="round"/></svg>
<svg style="position:absolute;left:41.0px;top:977.0px" width="24" height="24" viewBox="0 0 24 24"><g fill="none" stroke="#14598f" stroke-width="2.600" stroke-linejoin="round"><path d="M1.500 5.500c4 0 6.500 4 10.500 4s6.500-5 10-5.500"/><path d="M1.500 11.500c4 0 6.500 2.500 10.500 2.500s6.500-3.500 10-4"/><path d="M1.500 17c4 0 7-2.500 10.500-3"/><path d="M1.500 21.500c3 0 5.500-1.500 7.500-3.500"/></g><path d="M18.500 2l4.500 1.500-2 3.500z" fill="#14598f"/><path d="M20.500 8l2.500 1-1 3z" fill="#14598f"/><circle cx="18.300" cy="18.700" r="4.400" fill="#fff" stroke="#14598f" stroke-width="2.600" stroke-dasharray="2.100 1.350"/><circle cx="18.300" cy="18.700" r="3.500" fill="#fff" stroke="#14598f" stroke-width="1.300"/><circle cx="18.300" cy="18.700" r="1.300" fill="#fff" stroke="#14598f" stroke-width="1"/></svg>
<div style="position:absolute;left:4px;top:348px;width:64px;height:1px;background:#a0a0a0;"></div>
<div style="position:absolute;left:4px;top:526.5px;width:64px;height:1.0px;background:#a0a0a0;"></div>
<div style="position:absolute;left:4px;top:636.5px;width:64px;height:1.0px;background:#a0a0a0;"></div>
<div style="position:absolute;left:4px;top:746.5px;width:64px;height:1.0px;background:#a0a0a0;"></div>
<div style="position:absolute;left:4px;top:857px;width:64px;height:1px;background:#a0a0a0;"></div>
<div style="position:absolute;left:4px;top:932.5px;width:64px;height:1.0px;background:#a0a0a0;"></div>
<div style="position:absolute;left:1602px;top:254px;width:309px;height:786px;background:#d4e4f4;"></div>
<div style="position:absolute;left:1602px;top:256px;width:2px;height:784px;background:#f6f8ff;"></div>
<div style="position:absolute;left:1604px;top:256px;width:2px;height:784px;background:#94b4d4;"></div>
<div style="position:absolute;left:1908px;top:256px;width:3px;height:784px;background:#aab9c8;"></div>
<div style="position:absolute;left:1606px;top:256px;width:302px;height:784px;background:#f3f6fc;"></div>
<div style="position:absolute;left:1604px;top:256px;width:304px;height:27px;background:linear-gradient(#9db7d6,#a7bfda);"></div>
<span style="position:absolute;left:1608px;top:262.0px;font:bold 12px/16px 'Liberation Sans',sans-serif;color:#000;white-space:pre;transform-origin:0 50%;transform:scaleX(0.9140);">Bandeja predeterminada</span>
<div style="position:absolute;left:1893px;top:262px;width:12px;height:13px;background:#c8404a;"></div>
<svg style="position:absolute;left:1895px;top:265px" width="8" height="8" viewBox="0 0 8 8"><path d="M1 1l6 6M7 1L1 7" stroke="#fff" stroke-width="1.600"/></svg>
<div style="position:absolute;left:1606px;top:283.5px;width:301px;height:17.0px;background:linear-gradient(#f6f6f6,#e4e4e4 45%,#bdbdbd);border-top:1px solid #fff;border-bottom:1px solid #a8a8a8;box-sizing:border-box"></div>
<svg style="position:absolute;left:1614px;top:288.0px" width="8" height="8" viewBox="0 0 8 8"><path d="M1 .5l6 3.500-6 3.500z" fill="#111"/></svg>
<span style="position:absolute;left:1628px;top:284.0px;font:12px/16px 'Liberation Sans',sans-serif;color:#000;white-space:pre;transform-origin:0 50%;transform:scaleX(0.9580);">Sombras</span>
<div style="position:absolute;left:1891px;top:285.0px;width:14px;height:14.0px;background:#ececec;border:1px solid #b4b4b4;box-sizing:border-box"></div>
<svg style="position:absolute;left:1895px;top:289.5px" width="6" height="6" viewBox="0 0 6 6"><path d="M.5 .5l5 5M5.500 .5l-5 5" stroke="#111" stroke-width="1.200"/></svg>
<div style="position:absolute;left:1606px;top:302.5px;width:301px;height:17.0px;background:linear-gradient(#f6f6f6,#e4e4e4 45%,#bdbdbd);border-top:1px solid #fff;border-bottom:1px solid #a8a8a8;box-sizing:border-box"></div>
<svg style="position:absolute;left:1614px;top:307.0px" width="8" height="8" viewBox="0 0 8 8"><path d="M1 .5l6 3.500-6 3.500z" fill="#111"/></svg>
<span style="position:absolute;left:1628px;top:303.0px;font:12px/16px 'Liberation Sans',sans-serif;color:#000;white-space:pre;transform-origin:0 50%;transform:scaleX(0.8908);">Escenas</span>
<div style="position:absolute;left:1891px;top:304.0px;width:14px;height:14.0px;background:#ececec;border:1px solid #b4b4b4;box-sizing:border-box"></div>
<svg style="position:absolute;left:1895px;top:308.5px" width="6" height="6" viewBox="0 0 6 6"><path d="M.5 .5l5 5M5.500 .5l-5 5" stroke="#111" stroke-width="1.200"/></svg>
<div style="position:absolute;left:1606px;top:321.5px;width:301px;height:17.0px;background:linear-gradient(#f6f6f6,#e4e4e4 45%,#bdbdbd);border-top:1px solid #fff;border-bottom:1px solid #a8a8a8;box-sizing:border-box"></div>
<svg style="position:absolute;left:1614px;top:326.0px" width="8" height="8" viewBox="0 0 8 8"><path d="M1 .5l6 3.500-6 3.500z" fill="#111"/></svg>
<span style="position:absolute;left:1628px;top:322.0px;font:12px/16px 'Liberation Sans',sans-serif;color:#000;white-space:pre;transform-origin:0 50%;transform:scaleX(1.0196);">Instructor</span>
<div style="position:absolute;left:1891px;top:323.0px;width:14px;height:14.0px;background:#ececec;border:1px solid #b4b4b4;box-sizing:border-box"></div>
<svg style="position:absolute;left:1895px;top:327.5px" width="6" height="6" viewBox="0 0 6 6"><path d="M.5 .5l5 5M5.500 .5l-5 5" stroke="#111" stroke-width="1.200"/></svg>
<div style="position:absolute;left:1606px;top:340.5px;width:301px;height:17.0px;background:linear-gradient(#f6f6f6,#e4e4e4 45%,#bdbdbd);border-top:1px solid #fff;border-bottom:1px solid #a8a8a8;box-sizing:border-box"></div>
<svg style="position:absolute;left:1613px;top:345.5px" width="9" height="8" viewBox="0 0 9 8"><path d="M.5 1h8l-4 6z" fill="#111"/></svg>
<span style="position:absolute;left:1628px;top:341.0px;font:12px/16px 'Liberation Sans',sans-serif;color:#000;white-space:pre;transform-origin:0 50%;transform:scaleX(0.9756);">Materiales</span>
<div style="position:absolute;left:1891px;top:342.0px;width:14px;height:14.0px;background:#ececec;border:1px solid #b4b4b4;box-sizing:border-box"></div>
<svg style="position:absolute;left:1895px;top:346.5px" width="6" height="6" viewBox="0 0 6 6"><path d="M.5 .5l5 5M5.500 .5l-5 5" stroke="#111" stroke-width="1.200"/></svg>
<div style="position:absolute;left:1606px;top:357px;width:301px;height:75px;background:#f0f0f0;"></div>
<div style="position:absolute;left:1608px;top:360px;width:66px;height:69px;background:#d2d2d4;border:1px solid #a8a8a8;box-sizing:border-box;box-shadow:inset 0 0 0 1px #e8e8e8"></div>
<svg style="position:absolute;left:1663px;top:418px" width="8" height="8" viewBox="0 0 8 8"><path d="M8 0v8H0z" fill="#f4f4f4" stroke="#aaa" stroke-width="0.6"/></svg>
<div style="position:absolute;left:1677px;top:359.5px;width:203px;height:19.5px;background:#fff;border:1px solid #7a7a7a;box-sizing:border-box"></div>
<span style="position:absolute;left:1682px;top:361.5px;font:11px/15px 'Liberation Sans',sans-serif;color:#000;white-space:pre;transform-origin:0 50%;transform:scaleX(0.9812);">Concreto pulido nuevo</span>
<svg style="position:absolute;left:1887px;top:361px" width="14" height="17" viewBox="0 0 14 17"><rect x="1" y="0" width="12" height="8" fill="#fff" stroke="#888" stroke-width="0.600"/><path d="M3 2h8l-4 4.500z" fill="#111"/><rect x="1" y="8" width="12" height="9" fill="#111"/><path d="M7 9.500v6M4 12.500h6" stroke="#fff" stroke-width="1.800"/></svg>
<svg style="position:absolute;left:1884px;top:382px" width="20" height="22" viewBox="0 0 20 22"><path d="M5 5l8-3 6 3-1 9-8 5-6-3z" fill="#222" stroke="#111"/><path d="M5 5l8-3 6 3-8 3z" fill="#ddd" stroke="#111"/><path d="M7.500 5l8-2.500M10 6l7-2" stroke="#111" stroke-width="1.300"/><path d="M11 11l7-3M11 14l7-3" stroke="#aaa"/><circle cx="6" cy="15" r="4.500" fill="#fff" stroke="#111" stroke-width="1.200"/><path d="M6 12.500v5M3.500 15h5" stroke="#111" stroke-width="1.200"/></svg>
<svg style="position:absolute;left:1884px;top:407px" width="22" height="22" viewBox="0 0 22 22"><rect width="22" height="22" fill="#fff"/><path d="M0 0l22 22H0z" fill="#9fb4c8"/></svg>
<div style="position:absolute;left:1606px;top:432px;width:301px;height:1px;background:#c8c8c8;"></div>
<div style="position:absolute;left:1606px;top:433px;width:301px;height:26px;background:#f0f0f0;"></div>
<div style="position:absolute;left:1609px;top:439px;width:65px;height:20px;background:#fff;border:1px solid #dcdcdc;border-bottom:none;box-sizing:border-box"></div>
<div style="position:absolute;left:1674px;top:441px;width:42px;height:18px;background:#f0f0f0;border:1px solid #d4d4d4;border-bottom:none;box-sizing:border-box"></div>
<div style="position:absolute;left:1674px;top:458px;width:233px;height:1px;background:#d9d9d9;"></div>
<span style="position:absolute;left:1612px;top:440.5px;font:11px/15px 'Liberation Sans',sans-serif;color:#000;white-space:pre;transform-origin:0 50%;transform:scaleX(0.9396);">Seleccionar</span>
<span style="position:absolute;left:1678px;top:442.5px;font:11px/15px 'Liberation Sans',sans-serif;color:#000;white-space:pre;transform-origin:0 50%;transform:scaleX(0.9147);">Edición</span>
<svg style="position:absolute;left:1885px;top:436px" width="20" height="20" viewBox="0 0 20 20"><path d="M2 18l1.500-4L11 6.500 13.500 9 6 16.500z" fill="#e8b84a" stroke="#333" stroke-width="0.900"/><path d="M10 5l5 5" stroke="#111" stroke-width="2.500"/><path d="M12.500 7.500L17 3" stroke="#111" stroke-width="4" stroke-linecap="round"/></svg>
<div style="position:absolute;left:1606px;top:459px;width:301px;height:31px;background:#f3f3f3;"></div>
<svg style="position:absolute;left:1616px;top:466px" width="16" height="16" viewBox="0 0 16 16"><path d="M1.500 7.500l7-6v3.500h5v5h-5v3.500z" fill="#fff" stroke="#111" stroke-width="1.300" stroke-linejoin="round" transform="translate(0,.5)"/></svg>
<svg style="position:absolute;left:1640px;top:466px" width="16" height="16" viewBox="0 0 16 16"><path d="M14.500 7.500l-7-6v3.500h-5v5h5v3.500z" fill="#fff" stroke="#b0b0b0" stroke-width="1.300" stroke-linejoin="round" transform="translate(0,.5)"/></svg>
<svg style="position:absolute;left:1662px;top:465px" width="18" height="18" viewBox="0 0 18 18"><path d="M1.500 9L9 2l2 1.800V2.500h2v3L16.500 9M3.500 8v8h11V8" fill="#fff" stroke="#111" stroke-width="1.400" stroke-linejoin="round"/><rect x="7" y="10.500" width="4" height="5.500" fill="#111"/></svg>
<div style="position:absolute;left:1684.5px;top:466px;width:198.5px;height:23px;background:#fff;border:1px solid #7a7a7a;border-bottom:none;box-sizing:border-box"></div>
<span style="position:absolute;left:1689px;top:469.5px;font:11px/15px 'Liberation Sans',sans-serif;color:#000;white-space:pre;transform-origin:0 50%;transform:scaleX(0.9892);">Asfaltado y revestimientos</span>
<svg style="position:absolute;left:1868px;top:474px" width="10" height="7" viewBox="0 0 10 7"><path d="M1 1l4 4 4-4" fill="none" stroke="#333" stroke-width="1.100"/></svg>
<svg style="position:absolute;left:1889px;top:464px" width="16" height="18" viewBox="0 0 16 18"><path d="M6 1l9 8-9 8z" fill="#111"/><rect x="1" y="4.500" width="7" height="9" rx="1" fill="#3d7ad8" stroke="#1c3f80" stroke-width="0.800"/><path d="M2.500 7.500h4M2.500 9.500h4" stroke="#fff" stroke-width="1"/></svg>
<div style="position:absolute;left:1609px;top:490px;width:298px;height:103px;background:#fff;"></div>
<div style="position:absolute;left:1612.8px;top:491.8px;width:48.700000000000045px;height:48.900000000000034px;background:#3f393d;border:1px solid #a0a0a0;box-shadow:inset 0 0 0 1px #fff;box-sizing:border-box"></div>
<div style="position:absolute;left:1664.7px;top:491.8px;width:48.700000000000045px;height:48.900000000000034px;background:#1d1d1f;border:1px solid #a0a0a0;box-shadow:inset 0 0 0 1px #fff;box-sizing:border-box"></div>
<div style="position:absolute;left:1716.6px;top:491.8px;width:48.700000000000045px;height:48.900000000000034px;background:#858b91;border:1px solid #a0a0a0;box-shadow:inset 0 0 0 1px #fff;box-sizing:border-box"></div>
<div style="position:absolute;left:1768.5px;top:491.8px;width:48.700000000000045px;height:48.900000000000034px;background:#8e9092;border:1px solid #a0a0a0;box-shadow:inset 0 0 0 1px #fff;box-sizing:border-box"></div>
<div style="position:absolute;left:1820.4px;top:491.8px;width:48.69999999999982px;height:48.900000000000034px;background:#9e9897;border:1px solid #a0a0a0;box-shadow:inset 0 0 0 1px #fff;box-sizing:border-box"></div>
<div style="position:absolute;left:1612.8px;top:543.7px;width:48.700000000000045px;height:48.89999999999998px;background:#c9c9cb;border:1px solid #a0a0a0;box-shadow:inset 0 0 0 1px #fff;box-sizing:border-box"></div>
<div style="position:absolute;left:1664.7px;top:543.7px;width:48.700000000000045px;height:48.89999999999998px;background:#e2e2e2;border:1px solid #a0a0a0;box-shadow:inset 0 0 0 1px #fff;box-sizing:border-box"></div>
<div style="position:absolute;left:1716.6px;top:543.7px;width:48.700000000000045px;height:48.89999999999998px;background:repeating-linear-gradient(90deg,#9a908a 0 1.500px,#6e6660 1.500px 3px);border:1px solid #a0a0a0;box-shadow:inset 0 0 0 1px #fff;box-sizing:border-box"></div>
<div style="position:absolute;left:1768.5px;top:543.7px;width:48.700000000000045px;height:48.89999999999998px;background:#abb0b0;border:1px solid #a0a0a0;box-shadow:inset 0 0 0 1px #fff;box-sizing:border-box"></div>
<div style="position:absolute;left:1893px;top:490px;width:14px;height:103px;background:#f0f0f0;"></div>
<div style="position:absolute;left:1893px;top:506.5px;width:14px;height:16.0px;background:#cdcdcd;"></div>
<svg style="position:absolute;left:1896px;top:494px" width="9" height="7" viewBox="0 0 9 7"><path d="M1 5.500l3.500-4 3.500 4" fill="none" stroke="#444" stroke-width="1.400"/></svg>
<svg style="position:absolute;left:1896px;top:580px" width="9" height="7" viewBox="0 0 9 7"><path d="M1 1.500l3.500 4 3.500-4" fill="none" stroke="#444" stroke-width="1.400"/></svg>
<div style="position:absolute;left:1606px;top:593px;width:301px;height:2px;background:#f0f0f0;"></div>
<div style="position:absolute;left:1606px;top:595px;width:301px;height:1px;background:#c8d4e0;"></div>
<div style="position:absolute;left:0px;top:1011px;width:1604px;height:29px;background:#f0f0f0;"></div>
<svg style="position:absolute;left:1.0px;top:1014.5px" width="24" height="24" viewBox="0 0 24 24"><circle cx="12" cy="12" r="7" fill="#e4e4e4" stroke="#aaa"/><path d="M12 7.500c-2 0-3 1.500-3 3 0 2 3 5.500 3 5.500s3-3.500 3-5.500c0-1.500-1-3-3-3z" fill="#999"/></svg>
<svg style="position:absolute;left:31.0px;top:1014.5px" width="24" height="24" viewBox="0 0 24 24"><circle cx="12" cy="12" r="7.300" fill="#fff" stroke="#222" stroke-width="1.300"/><circle cx="12" cy="8.300" r="1.500" fill="#222"/><path d="M10 11h3.200v5.500M9.800 16.500h5" stroke="#222" stroke-width="1.500" fill="none"/></svg>
<div style="position:absolute;left:62px;top:1022px;width:1px;height:8px;background:#a0a0a0;"></div>
<span style="position:absolute;left:73px;top:1020.0px;font:12px/16px 'Liberation Sans',sans-serif;color:#000;white-space:pre;transform-origin:0 50%;transform:scaleX(1.1027);">Arrastra en una dirección para desplazar.</span>
<div style="position:absolute;left:0px;top:1040px;width:1920px;height:40px;background:linear-gradient(90deg,#1f1f21 0,#212123 40%,#2a2a2b 58%,#2d2d2f 88%,#202022 100%);"></div>
<svg style="position:absolute;left:16.0px;top:1052.0px" width="16" height="16" viewBox="0 0 16 16"><path d="M0 2.300l6.500-.9v6.100H0zM7.300 1.300L16 0v7.500H7.300zM0 8.300h6.500v6.100L0 13.500zM7.300 8.300H16V16l-8.700-1.300z" fill="#fff"/></svg>
<div style="position:absolute;left:48px;top:1040px;width:343px;height:40px;background:#f2f2f2;"></div>
<svg style="position:absolute;left:59.0px;top:1051.0px" width="18" height="18" viewBox="0 0 18 18"><circle cx="11" cy="7" r="5.300" fill="none" stroke="#222" stroke-width="1.400"/><path d="M7 11l-5.500 5.500" stroke="#222" stroke-width="1.500"/></svg>
<span style="position:absolute;left:88px;top:1051.0px;font:15px/19px 'Liberation Sans',sans-serif;color:#3c3c3c;white-space:pre;transform-origin:0 50%;transform:scaleX(0.9211);">Buscar</span>
<svg style="position:absolute;left:407.0px;top:1051.0px" width="18" height="18" viewBox="0 0 18 18"><circle cx="9" cy="9" r="6.800" fill="none" stroke="#fff" stroke-width="2.200"/></svg>
<svg style="position:absolute;left:454.0px;top:1051.0px" width="20" height="18" viewBox="0 0 20 18"><path d="M3 3.500h11M3 14.500h11" stroke="#fff" stroke-width="1.300"/><rect x="3.500" y="6" width="10" height="6" fill="none" stroke="#fff" stroke-width="1.300"/><path d="M17 2.500v3M17 7.500v5M17 14v2" stroke="#fff" stroke-width="1.500"/></svg>
<div style="position:absolute;left:883px;top:1040px;width:47px;height:40px;background:#48484a;"></div>
<svg style="position:absolute;left:503.0px;top:1048.0px" width="24" height="24" viewBox="0 0 24 24"><path d="M2 13C2 6 7 2 13 2c6 0 9 4 9 9v2H9c0 3 3 5 6 5 2 0 4-.5 6-1.500v4C19 21.500 17 22 14 22 7 22 2 19 2 13z" fill="#2a8ae0"/><path d="M9 10h8c0-2-1.500-4-4-4s-4 2-4 4z" fill="#222224"/><path d="M2 13c0-3 2-6 5-7-2 2-3 4-3 7z" fill="#1565b0"/></svg>
<svg style="position:absolute;left:550.0px;top:1049.0px" width="26" height="22" viewBox="0 0 26 22"><rect x="1" y="7" width="24" height="14" fill="#2a8ae0"/><path d="M1 7l12-6 12 6-12 8z" fill="#fff"/><path d="M1 7l12 8 12-8v2l-12 8L1 9z" fill="#1565b0"/></svg>
<svg style="position:absolute;left:599.0px;top:1049.0px" width="26" height="22" viewBox="0 0 26 22"><path d="M1 3h9l2 2h13v15H1z" fill="#e8b030"/><rect x="1" y="7" width="24" height="14" fill="#fad560"/><rect x="7" y="14" width="12" height="7" fill="#3a8ae0"/><rect x="10" y="17" width="6" height="4" fill="#fad560"/></svg>
<svg style="position:absolute;left:649.0px;top:1047.0px" width="24" height="26" viewBox="0 0 24 26"><rect x="1" y="7" width="22" height="18" rx="1.500" fill="#f4f4f4"/><path d="M7 7V5a5 5 0 0 1 10 0v2" fill="none" stroke="#2a8ae0" stroke-width="1.800"/><rect x="7.500" y="11" width="4" height="4" fill="#f25022"/><rect x="12.500" y="11" width="4" height="4" fill="#7fba00"/><rect x="7.500" y="16" width="4" height="4" fill="#00a4ef"/><rect x="12.500" y="16" width="4" height="4" fill="#ffb900"/></svg>
<svg style="position:absolute;left:699.0px;top:1048.0px" width="24" height="24" viewBox="0 0 26 26"><circle cx="12" cy="12" r="11" fill="#e8e8e8"/><path d="M12 1a11 11 0 0 1 9.500 5.500H12A5.500 5.500 0 0 0 7 9.500L3 4.500A11 11 0 0 1 12 1z" fill="#ea4335"/><path d="M21.500 6.500A11 11 0 0 1 11 23l5-8.500a5.500 5.500 0 0 0 .5-8z" fill="#fbbc05"/><path d="M3 4.500l4.500 8A5.500 5.500 0 0 0 14 17l-3 6A11 11 0 0 1 3 4.500z" fill="#34a853"/><circle cx="12" cy="12" r="4.500" fill="#4285f4" stroke="#fff" stroke-width="1.300"/><circle cx="19" cy="19" r="5.500" fill="#c8e0c0" stroke="#fff"/><path d="M15 21l3-4 2 2 2-2v4z" fill="#d86a8a"/></svg>
<svg style="position:absolute;left:748.0px;top:1048.0px" width="24" height="24" viewBox="0 0 24 24"><circle cx="12" cy="12" r="11.500" fill="#1ed760"/><path d="M5.500 8.500c4-1.300 9-1 13 1.200M6.500 12.300c3.500-1 7.500-.6 10.500 1.200M7.500 15.800c3-.8 6-.5 8.500 1" fill="none" stroke="#222" stroke-width="2" stroke-linecap="round"/></svg>
<svg style="position:absolute;left:796.0px;top:1047.0px" width="24" height="26" viewBox="0 0 24 26"><rect width="24" height="26" fill="#f4e4e4"/><path d="M3 23L10 3h4l7 20h-5l-1.200-4H9.500L8 23z" fill="#c4222a"/><path d="M10.500 15h3.500l-1.800-6z" fill="#f4e4e4"/></svg>
<svg style="position:absolute;left:845.0px;top:1048.0px" width="24" height="24" viewBox="0 0 24 24"><rect width="24" height="24" rx="2.500" fill="#b30b00"/><path d="M5 19c2-1 5-5 6.500-9 .8-2.500.5-5-.5-5s-1.500 2 0 5c1.500 3 4 6 7 7 1.500.3 2-1 0-1.500-3-.5-9 1-13 3.500z" fill="none" stroke="#fff" stroke-width="1.400"/></svg>
<svg style="position:absolute;left:894.0px;top:1047.0px" width="26" height="26" viewBox="0 0 26 26"><rect width="26" height="26" rx="1" fill="#dfe8f2"/><path d="M13 4l8 4.500-3 1.800L13 7.500 8 10.300v6l5 2.900 5-2.900 3 1.900-8 4.600-8-4.600V8.500z" fill="#1a6fb5"/><path d="M15.500 11L22 7v12l-6.500-4z" fill="#1a6fb5"/><path d="M8.500 9.500l4.500-2.500 3 1.700-4.500 2.700v4.500l-3-1.700z" fill="#5aa8e0"/></svg>
<svg style="position:absolute;left:944.0px;top:1048.0px" width="24" height="24" viewBox="0 0 26 26"><circle cx="12" cy="12" r="11" fill="#e8e8e8"/><path d="M12 1a11 11 0 0 1 9.500 5.500H12A5.500 5.500 0 0 0 7 9.500L3 4.500A11 11 0 0 1 12 1z" fill="#ea4335"/><path d="M21.500 6.500A11 11 0 0 1 11 23l5-8.500a5.500 5.500 0 0 0 .5-8z" fill="#fbbc05"/><path d="M3 4.500l4.500 8A5.500 5.500 0 0 0 14 17l-3 6A11 11 0 0 1 3 4.500z" fill="#34a853"/><circle cx="12" cy="12" r="4.500" fill="#4285f4" stroke="#fff" stroke-width="1.300"/><circle cx="19.500" cy="19.500" r="6" fill="#1a5a3a"/><text x="19.500" y="23" text-anchor="middle" font-size="9" font-family="Liberation Sans" fill="#fff">A</text></svg>
<svg style="position:absolute;left:992.0px;top:1048.0px" width="24" height="24" viewBox="0 0 24 24"><rect width="24" height="24" fill="#5a8ab4"/><path d="M0 13h24M12 0v24" stroke="#d8e4f0" stroke-width="0.800"/><path d="M4 18c4-2 9-6 15-13M10 12c-2-3-4-3-6-2 1 2 3 3 6 2zM13 9c0-3 2-5 5-5 0 3-2 5-5 5z" fill="#fff" stroke="#fff" stroke-width="1"/><text x="13" y="22" font-size="9" font-family="Liberation Sans" fill="#fff">8</text></svg>
<svg style="position:absolute;left:1041.0px;top:1049.0px" width="24" height="22" viewBox="0 0 24 22"><rect x="9" y="1" width="14" height="20" fill="#fff"/><path d="M12 5h9M12 8.500h9M12 12h9M12 15.500h9" stroke="#2b579a" stroke-width="1.500"/><rect x="0" y="3" width="14" height="16" fill="#2b579a"/><text x="7" y="15.500" text-anchor="middle" font-size="11" font-weight="bold" font-family="Liberation Sans" fill="#fff">W</text></svg>
<div style="position:absolute;left:593.0px;top:1078px;width:39.0px;height:2px;background:#a8cdf0;"></div>
<div style="position:absolute;left:641.9px;top:1078px;width:39.0px;height:2px;background:#a8cdf0;"></div>
<div style="position:absolute;left:690.8px;top:1078px;width:39.0px;height:2px;background:#a8cdf0;"></div>
<div style="position:absolute;left:739.7px;top:1078px;width:39.0px;height:2px;background:#a8cdf0;"></div>
<div style="position:absolute;left:788.6px;top:1078px;width:39.0px;height:2px;background:#a8cdf0;"></div>
<div style="position:absolute;left:837.5px;top:1078px;width:39.0px;height:2px;background:#a8cdf0;"></div>
<div style="position:absolute;left:886.4px;top:1078px;width:39.0px;height:2px;background:#a8cdf0;"></div>
<div style="position:absolute;left:935.3px;top:1078px;width:39.0px;height:2px;background:#a8cdf0;"></div>
<div style="position:absolute;left:984.2px;top:1078px;width:39.0px;height:2px;background:#a8cdf0;"></div>
<div style="position:absolute;left:1033.1px;top:1078px;width:39.0px;height:2px;background:#a8cdf0;"></div>
<span style="position:absolute;left:1461px;top:1052.25px;font:11.5px/15.5px 'Liberation Sans',sans-serif;color:#fff;white-space:pre;transform-origin:0 50%;transform:scaleX(1.0223);">Dirección</span>
<div style="position:absolute;left:1517px;top:1046px;width:199px;height:28px;background:#fff;"></div>
<svg style="position:absolute;left:1696.0px;top:1056.5px" width="10" height="7" viewBox="0 0 10 7"><path d="M1 1l4 4 4-4" fill="none" stroke="#333" stroke-width="1.200"/></svg>
<div style="position:absolute;left:1717px;top:1046px;width:30px;height:28px;background:#fcfcfc;"></div>
<svg style="position:absolute;left:1725.0px;top:1053.0px" width="14" height="14" viewBox="0 0 14 14"><path d="M11.500 7A4.500 4.500 0 1 1 7 2.500" fill="none" stroke="#666" stroke-width="1.300"/><path d="M7 0l3 2.500L7 5z" fill="#666"/></svg>
<svg style="position:absolute;left:1754.0px;top:1056.0px" width="14" height="8" viewBox="0 0 14 8"><path d="M1 7l6-6 6 6" fill="none" stroke="#fff" stroke-width="1.400"/></svg>
<svg style="position:absolute;left:1774.0px;top:1052.0px" width="18" height="16" viewBox="0 0 18 16"><path d="M1 5.500h3l4-3.500v12l-4-3.500H1z" fill="none" stroke="#fff" stroke-width="1.200"/><path d="M10.500 5c1.500 1.500 1.500 4.500 0 6M12.500 3c2.500 2.500 2.500 7.500 0 10" fill="none" stroke="#fff" stroke-width="1"/><path d="M14.500 1.500c3.500 3.500 3.500 9.500 0 13" fill="none" stroke="#888" stroke-width="1"/></svg>
<span style="position:absolute;left:1803px;top:1043.25px;font:11.5px/15.5px 'Liberation Sans',sans-serif;color:#fff;white-space:pre;transform-origin:0 50%;transform:scaleX(0.9907);">05:25 p. m.</span>
<span style="position:absolute;left:1803px;top:1061.25px;font:11.5px/15.5px 'Liberation Sans',sans-serif;color:#fff;white-space:pre;transform-origin:0 50%;transform:scaleX(1.0251);">16/04/2026</span>
<svg style="position:absolute;left:1877.0px;top:1049.0px" width="24" height="24" viewBox="0 0 24 24"><path d="M3 3h15v11H9l-3 3v-3H3z" fill="#fff"/><path d="M5.500 6h10M5.500 8.500h10M5.500 11h10" stroke="#222" stroke-width="1"/><circle cx="17" cy="17" r="6" fill="#222" stroke="#fff" stroke-width="1.200"/><text x="17" y="20.500" text-anchor="middle" font-size="10" font-family="Liberation Sans" fill="#fff">1</text></svg>
<div style="position:absolute;left:1915px;top:1040px;width:1px;height:40px;background:#8a8a8a;"></div>
</body></html>
